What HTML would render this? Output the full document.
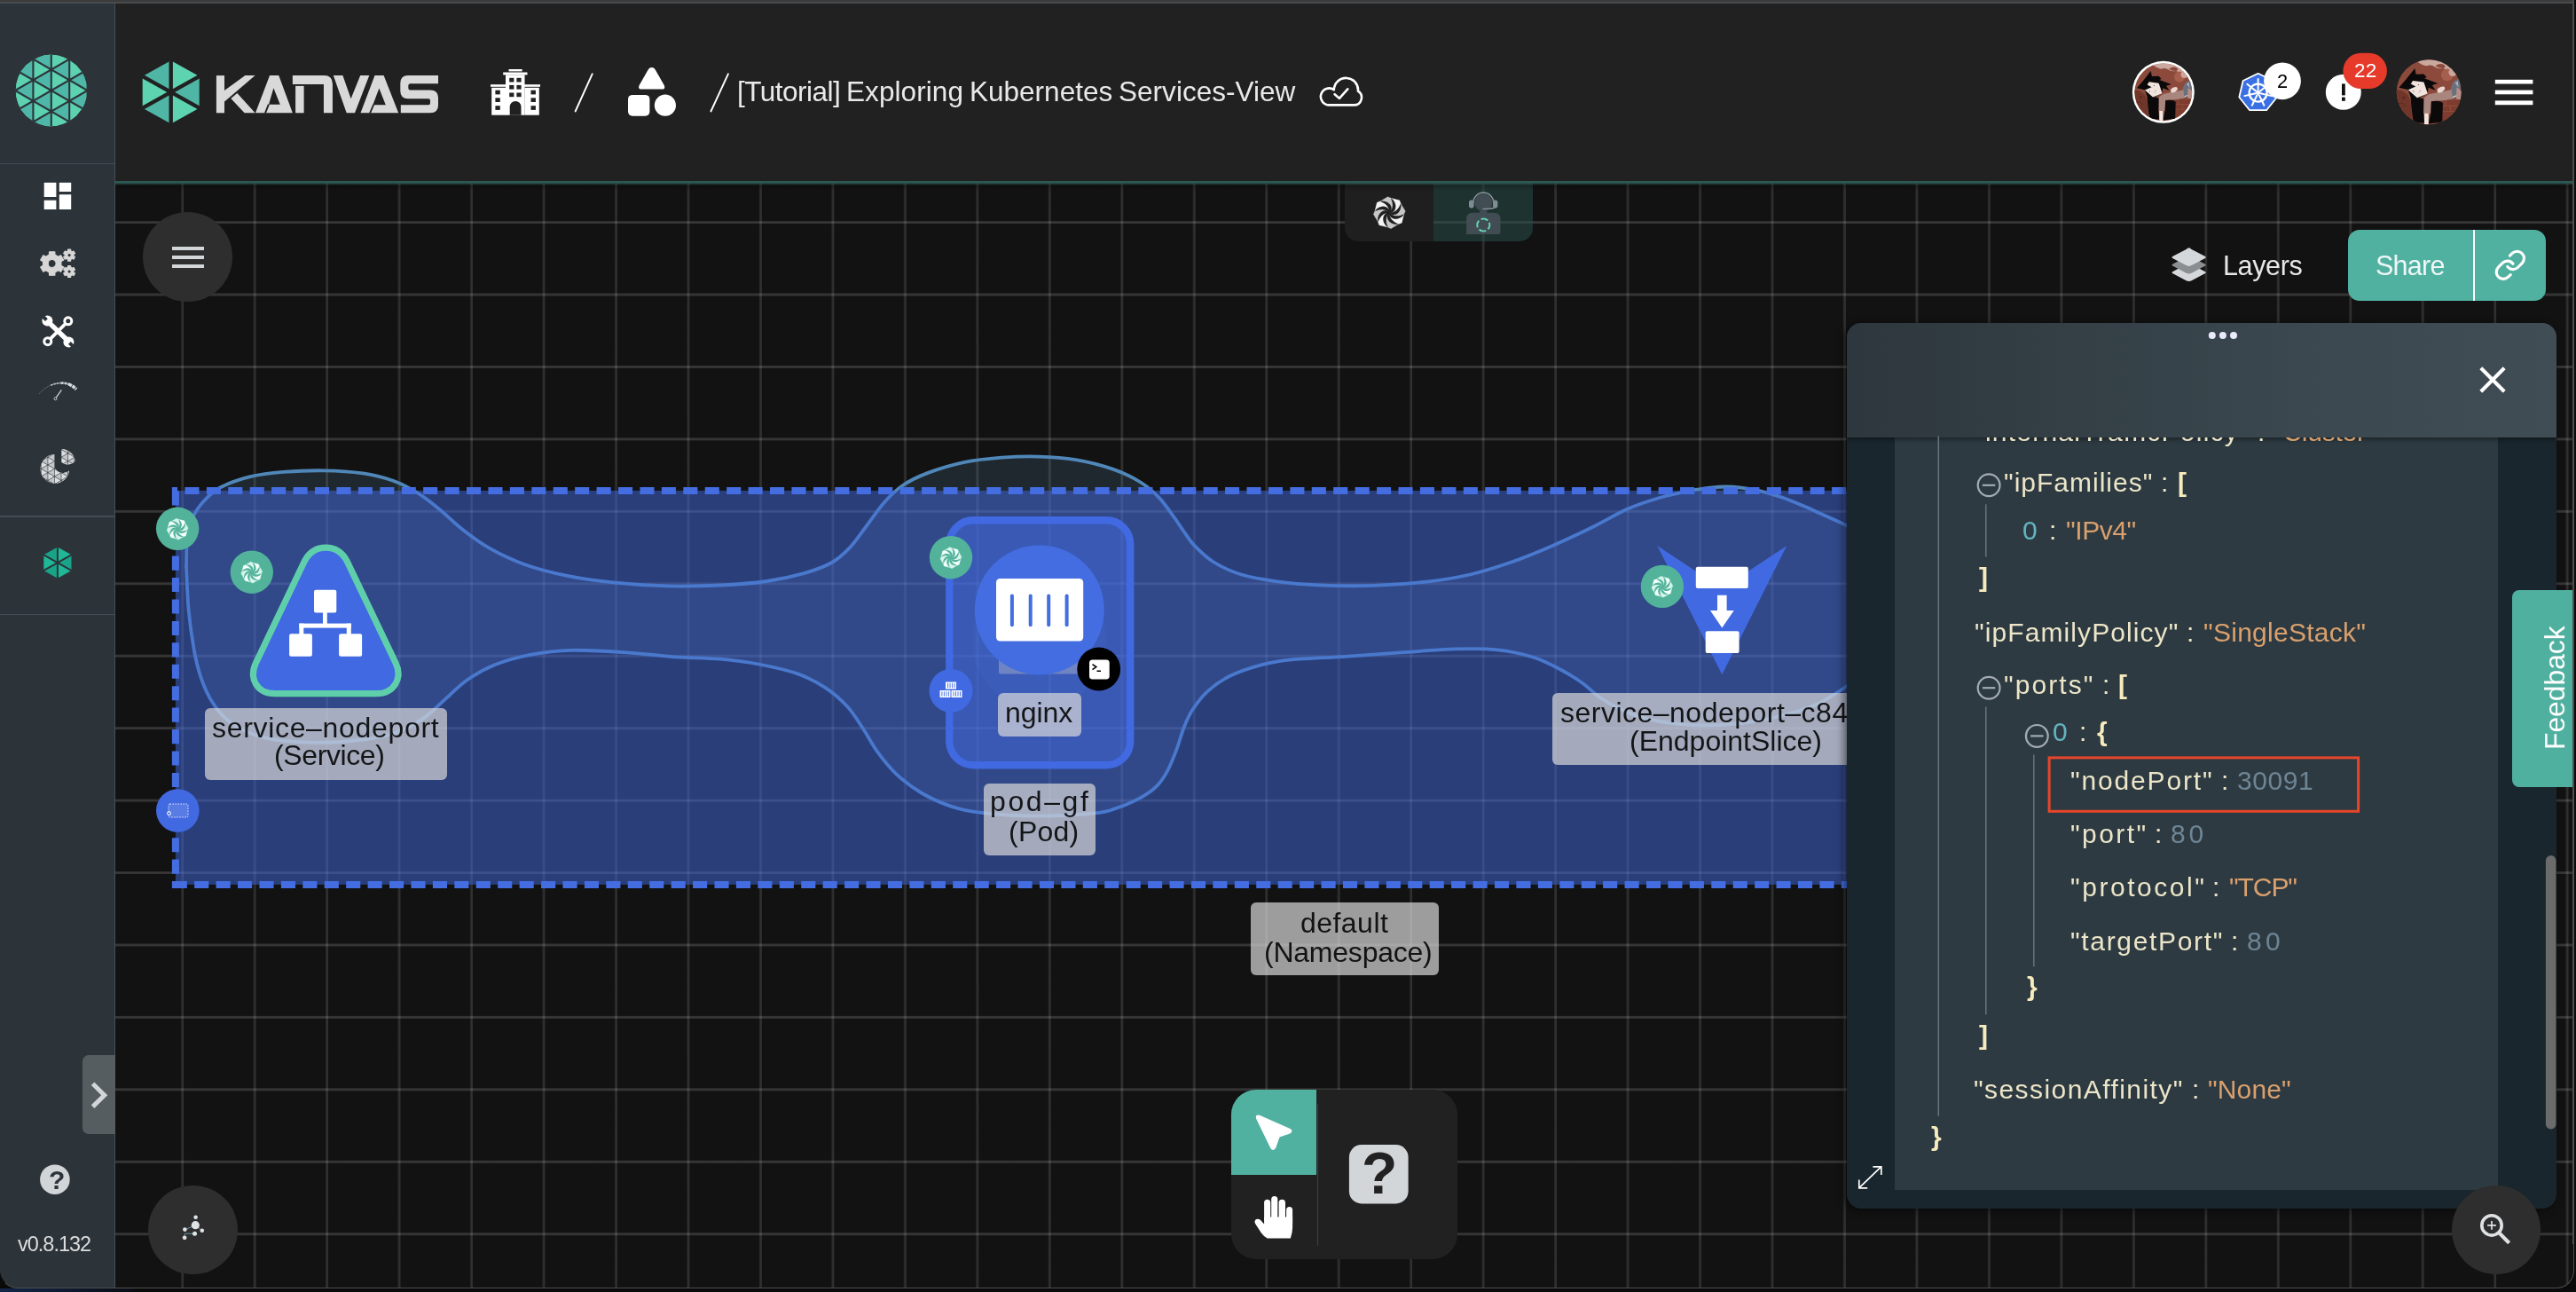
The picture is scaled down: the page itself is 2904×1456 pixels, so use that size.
<!DOCTYPE html>
<html lang="en"><head><meta charset="utf-8"><title>Kanvas</title>
<style>
*{box-sizing:border-box;margin:0;padding:0}
html,body{width:2904px;height:1456px;overflow:hidden;background:#0a0a0a}
body{font-family:"Liberation Sans",sans-serif;position:relative}
.a{position:absolute}
.t{position:absolute;white-space:pre;line-height:1;will-change:transform}
svg{position:absolute;overflow:visible}
#win{position:absolute;left:0;top:0;width:2902px;height:1451px;overflow:hidden;background:#121212;border-radius:0 0 20px 20px}
#grid{position:absolute;left:0;top:0;width:2904px;height:1456px;
 background-image:linear-gradient(to right,rgba(255,255,255,0) 0,rgba(255,255,255,.125) .7px,rgba(255,255,255,.125) 2.5px,rgba(255,255,255,0) 3.2px,transparent 3.2px),linear-gradient(to bottom,rgba(255,255,255,0) 0,rgba(255,255,255,.16) .6px,rgba(255,255,255,.16) 2.4px,rgba(255,255,255,0) 3px,transparent 3px);
 background-size:81.48px 81.45px;background-position:204.1px 249.1px}
.lbl{position:absolute;background:rgba(216,216,216,.7);border-radius:6px}
</style></head>
<body>
<div id="win">
<div id="grid"></div>
<svg width="2904" height="1456" viewBox="0 0 2904 1456" style="left:0;top:0"><path d="M210.0,639.3C210.2,634.1 209.8,617.7 211.0,608.4C212.2,599.1 214.1,590.8 217.2,583.6C220.3,576.4 224.3,570.7 229.5,565.0C234.7,559.3 239.3,554.1 248.1,549.5C256.9,544.9 270.3,540.1 282.2,537.2C294.1,534.3 305.4,533.0 319.3,531.9C333.2,530.8 350.8,530.0 365.8,530.3C380.8,530.5 396.2,531.5 409.1,533.4C422.0,535.3 432.9,538.1 443.2,541.8C453.5,545.5 462.2,550.3 471.0,555.7C479.8,561.1 487.5,567.6 495.8,574.3C504.1,581.0 511.3,588.8 520.6,596.0C529.9,603.2 539.6,610.9 551.5,617.6C563.4,624.3 577.3,631.0 591.8,636.2C606.2,641.4 621.7,645.2 638.2,648.6C654.7,652.0 671.7,654.3 690.8,656.3C709.9,658.3 732.6,659.9 752.8,660.4C773.0,660.9 793.6,660.4 812.2,659.5C830.8,658.6 848.8,657.2 864.5,655.0C880.2,652.8 894.0,649.7 906.2,646.2C918.4,642.7 928.9,638.9 937.6,634.0C946.3,629.1 952.1,623.3 958.5,616.6C964.9,609.9 969.5,602.4 975.9,594.0C982.3,585.6 989.8,574.0 996.8,566.2C1003.8,558.4 1009.6,552.5 1017.7,547.0C1025.8,541.5 1033.9,537.5 1045.5,533.1C1057.1,528.8 1073.4,523.8 1087.3,520.9C1101.2,518.0 1115.2,516.8 1129.1,515.7C1143.0,514.7 1157.0,514.2 1170.9,514.6C1184.8,515.0 1198.8,515.8 1212.7,518.1C1226.6,520.4 1242.2,524.4 1254.4,528.6C1266.6,532.8 1277.1,538.1 1285.8,543.5C1294.5,548.9 1300.3,554.2 1306.7,560.9C1313.1,567.6 1319.4,577.2 1324.1,583.6C1328.8,590.0 1331.2,594.3 1335.0,599.5C1338.8,604.7 1341.0,609.2 1346.6,614.9C1352.1,620.6 1359.5,628.1 1368.3,633.5C1377.1,638.9 1387.5,643.9 1399.4,647.5C1411.3,651.1 1425.3,653.3 1439.8,655.3C1454.3,657.3 1468.2,658.5 1486.3,659.3C1504.4,660.1 1527.7,660.6 1548.4,659.9C1569.1,659.2 1592.5,657.4 1610.6,655.3C1628.7,653.2 1641.6,651.1 1657.1,647.5C1672.6,643.9 1688.2,638.9 1703.7,633.5C1719.2,628.1 1734.8,621.6 1750.3,614.9C1765.8,608.2 1782.8,600.1 1796.9,593.2C1811.0,586.3 1822.7,578.9 1834.9,573.6C1847.1,568.3 1858.2,564.7 1869.9,561.3C1881.6,557.9 1895.1,555.1 1904.8,553.2C1914.5,551.3 1921.3,550.5 1928.1,549.7C1934.9,548.9 1939.8,548.5 1945.6,548.5C1951.4,548.5 1956.2,548.8 1963.0,549.7C1969.8,550.6 1978.5,551.9 1986.3,553.8C1994.1,555.6 2001.8,558.1 2009.6,560.8C2017.4,563.5 2025.1,566.8 2032.9,570.1C2040.7,573.4 2048.0,576.9 2056.2,580.6C2064.3,584.3 2073.7,588.0 2081.8,592.2C2089.9,596.4 2096.1,598.0 2105.0,606.0C2113.9,614.0 2127.5,626.0 2135.0,640.0C2142.5,654.0 2151.7,673.3 2150.0,690.0C2148.3,706.7 2136.3,726.1 2125.0,740.0C2113.7,753.9 2095.3,764.1 2082.0,773.3C2068.7,782.5 2059.2,789.0 2045.3,795.0C2031.4,801.0 2014.3,805.5 1998.8,809.0C1983.3,812.5 1967.7,814.8 1952.2,816.1C1936.7,817.4 1921.1,817.7 1905.6,816.8C1890.1,815.9 1871.9,813.5 1859.0,810.6C1846.1,807.8 1837.3,803.9 1828.0,799.7C1818.7,795.6 1810.3,790.6 1803.1,785.7C1795.8,780.8 1791.8,775.4 1784.5,770.2C1777.2,765.0 1768.9,759.6 1759.6,754.7C1750.3,749.8 1740.5,744.4 1728.6,740.7C1716.7,737.0 1702.7,733.8 1688.2,732.3C1673.7,730.8 1659.7,730.9 1641.6,731.4C1623.5,731.9 1600.2,734.0 1579.5,735.4C1558.8,736.8 1538.0,738.5 1517.4,739.8C1496.8,741.1 1471.7,741.8 1455.8,743.4C1439.9,745.0 1433.1,746.4 1421.8,749.4C1410.5,752.4 1397.6,756.5 1387.7,761.3C1377.8,766.1 1369.3,772.0 1362.2,778.3C1355.1,784.5 1349.6,792.0 1345.1,798.8C1340.5,805.6 1338.0,811.6 1334.9,819.2C1331.8,826.9 1329.5,836.5 1326.4,844.7C1323.3,852.9 1319.9,861.8 1316.2,868.6C1312.5,875.4 1309.4,880.5 1304.3,885.6C1299.2,890.7 1292.9,895.1 1285.5,899.2C1278.1,903.3 1268.1,907.5 1260.0,910.3C1251.9,913.1 1251.8,914.5 1237.0,916.1C1222.2,917.7 1192.4,919.6 1170.9,919.6C1149.4,919.6 1124.5,917.9 1108.2,916.1C1092.0,914.4 1085.0,912.9 1073.4,909.1C1061.8,905.3 1049.0,899.6 1038.6,893.5C1028.1,887.4 1018.8,880.1 1010.7,872.6C1002.6,865.1 996.2,856.9 989.8,848.2C983.4,839.5 978.2,829.0 972.4,820.3C966.6,811.6 962.0,803.5 955.0,796.0C948.0,788.5 939.9,781.2 930.6,775.1C921.3,769.0 911.5,763.8 899.3,759.4C887.1,755.0 872.0,751.8 857.5,749.0C843.0,746.2 828.5,744.2 812.2,742.7C796.0,741.2 777.6,741.5 760.0,740.3C742.4,739.1 725.6,736.5 706.3,735.3C687.0,734.0 662.4,732.4 644.4,732.8C626.4,733.2 612.5,735.1 598.0,737.8C583.5,740.5 569.6,744.5 557.7,749.2C545.8,754.0 536.0,759.8 526.7,766.3C517.4,772.8 510.2,780.7 502.0,787.9C493.8,795.1 487.0,803.1 477.2,809.6C467.4,816.1 456.6,822.4 443.2,826.6C429.8,830.8 411.7,833.3 396.7,835.0C381.7,836.7 367.8,837.0 353.4,836.8C338.9,836.6 322.4,835.7 310.0,833.7C297.6,831.8 288.4,829.1 279.1,825.1C269.8,821.1 261.3,815.8 254.3,809.6C247.3,803.4 242.0,795.6 237.3,787.9C232.7,780.2 229.5,772.5 226.4,763.2C223.3,753.9 221.0,745.1 218.7,732.2C216.4,719.3 213.9,701.3 212.5,685.8C211.1,670.3 210.4,647.0 210.0,639.3C209.6,631.5 209.8,644.4 210.0,639.3Z" fill="rgba(111,165,218,.15)" stroke="#5087b9" stroke-width="3.8" stroke-linejoin="round"/><rect x="197.9" y="552.9" width="2200" height="444" fill="rgba(65,105,225,.5)"/><g fill="none" stroke="#446de2" stroke-width="8" stroke-dasharray="16.1 8.33"><path d="M193.9,552.9 H2400" stroke-dashoffset="9.93"/><path d="M197.9,548.9 V1001" stroke-dashoffset="20.03"/><path d="M193.9,997 H2400" stroke-dashoffset="23.59"/></g><path d="M367.2,617.2 C378,617.2 386,623 391,632 L446,747 C454,764 445,781.7 424,781.7 L310,781.7 C289,781.7 280.5,764 288.5,747 L343.5,632 C348.5,623 356.5,617.2 367.2,617.2Z" fill="#4169e1" stroke="#5fcfab" stroke-width="7.2" stroke-linejoin="round"/><g fill="#fff"><rect x="354" y="664.8" width="25.3" height="25.7" rx="2"/><rect x="364" y="689" width="4.8" height="15"/><rect x="337.3" y="702.6" width="58.5" height="5"/><rect x="337.3" y="702.6" width="5" height="13"/><rect x="390.8" y="702.6" width="5" height="13"/><rect x="326.1" y="714.2" width="25.8" height="25.6" rx="2"/><rect x="382.1" y="714.2" width="26" height="25.6" rx="2"/></g><circle cx="200.1" cy="595.8" r="24.2" fill="#52b29a"/><polygon points="200.66,595.98 201.31,595.61 201.90,595.14 202.43,594.58 202.87,593.93 203.22,593.21 203.48,592.43 203.63,591.59 203.67,590.70 203.59,589.79 203.38,588.86 203.06,587.93 202.61,587.01 202.03,586.12 201.33,585.26 207.78,586.85 208.71,589.33 208.60,590.43 208.37,591.47 208.04,592.45 207.61,593.33 207.10,594.13 206.51,594.83 205.86,595.43 205.16,595.92 204.42,596.29 203.66,596.55 202.89,596.70 202.12,596.73 201.38,596.64 200.66,596.44" fill="#f2fffb" stroke="#f2fffb" stroke-width="0.3" stroke-linejoin="round"/><polygon points="200.66,596.44 201.38,596.64 202.12,596.73 202.89,596.70 203.66,596.55 204.42,596.29 205.16,595.92 205.86,595.43 206.51,594.83 207.10,594.13 207.61,593.33 208.04,592.45 208.37,591.47 208.60,590.43 208.71,589.33 212.14,595.02 211.04,597.43 210.18,598.13 209.29,598.71 208.37,599.16 207.44,599.48 206.51,599.69 205.60,599.77 204.71,599.73 203.87,599.58 203.09,599.32 202.37,598.97 201.72,598.53 201.16,598.00 200.69,597.41 200.32,596.76" fill="#d5f4ec" stroke="#d5f4ec" stroke-width="0.3" stroke-linejoin="round"/><polygon points="200.32,596.76 200.69,597.41 201.16,598.00 201.72,598.53 202.37,598.97 203.09,599.32 203.87,599.58 204.71,599.73 205.60,599.77 206.51,599.69 207.44,599.48 208.37,599.16 209.29,598.71 210.18,598.13 211.04,597.43 209.45,603.88 206.97,604.81 205.87,604.70 204.83,604.47 203.85,604.14 202.97,603.71 202.17,603.20 201.47,602.61 200.87,601.96 200.38,601.26 200.01,600.52 199.75,599.76 199.60,598.99 199.57,598.22 199.66,597.48 199.86,596.76" fill="#f2fffb" stroke="#f2fffb" stroke-width="0.3" stroke-linejoin="round"/><polygon points="199.86,596.76 199.66,597.48 199.57,598.22 199.60,598.99 199.75,599.76 200.01,600.52 200.38,601.26 200.87,601.96 201.47,602.61 202.17,603.20 202.97,603.71 203.85,604.14 204.83,604.47 205.87,604.70 206.97,604.81 201.28,608.24 198.87,607.14 198.17,606.28 197.59,605.39 197.14,604.47 196.82,603.54 196.61,602.61 196.53,601.70 196.57,600.81 196.72,599.97 196.98,599.19 197.33,598.47 197.77,597.82 198.30,597.26 198.89,596.79 199.54,596.42" fill="#d5f4ec" stroke="#d5f4ec" stroke-width="0.3" stroke-linejoin="round"/><polygon points="199.54,596.42 198.89,596.79 198.30,597.26 197.77,597.82 197.33,598.47 196.98,599.19 196.72,599.97 196.57,600.81 196.53,601.70 196.61,602.61 196.82,603.54 197.14,604.47 197.59,605.39 198.17,606.28 198.87,607.14 192.42,605.55 191.49,603.07 191.60,601.97 191.83,600.93 192.16,599.95 192.59,599.07 193.10,598.27 193.69,597.57 194.34,596.97 195.04,596.48 195.78,596.11 196.54,595.85 197.31,595.70 198.08,595.67 198.82,595.76 199.54,595.96" fill="#f2fffb" stroke="#f2fffb" stroke-width="0.3" stroke-linejoin="round"/><polygon points="199.54,595.96 198.82,595.76 198.08,595.67 197.31,595.70 196.54,595.85 195.78,596.11 195.04,596.48 194.34,596.97 193.69,597.57 193.10,598.27 192.59,599.07 192.16,599.95 191.83,600.93 191.60,601.97 191.49,603.07 188.06,597.38 189.16,594.97 190.02,594.27 190.91,593.69 191.83,593.24 192.76,592.92 193.69,592.71 194.60,592.63 195.49,592.67 196.33,592.82 197.11,593.08 197.83,593.43 198.48,593.87 199.04,594.40 199.51,594.99 199.88,595.64" fill="#d5f4ec" stroke="#d5f4ec" stroke-width="0.3" stroke-linejoin="round"/><polygon points="199.88,595.64 199.51,594.99 199.04,594.40 198.48,593.87 197.83,593.43 197.11,593.08 196.33,592.82 195.49,592.67 194.60,592.63 193.69,592.71 192.76,592.92 191.83,593.24 190.91,593.69 190.02,594.27 189.16,594.97 190.75,588.52 193.23,587.59 194.33,587.70 195.37,587.93 196.35,588.26 197.23,588.69 198.03,589.20 198.73,589.79 199.33,590.44 199.82,591.14 200.19,591.88 200.45,592.64 200.60,593.41 200.63,594.18 200.54,594.92 200.34,595.64" fill="#f2fffb" stroke="#f2fffb" stroke-width="0.3" stroke-linejoin="round"/><polygon points="200.34,595.64 200.54,594.92 200.63,594.18 200.60,593.41 200.45,592.64 200.19,591.88 199.82,591.14 199.33,590.44 198.73,589.79 198.03,589.20 197.23,588.69 196.35,588.26 195.37,587.93 194.33,587.70 193.23,587.59 198.92,584.16 201.33,585.26 202.03,586.12 202.61,587.01 203.06,587.93 203.38,588.86 203.59,589.79 203.67,590.70 203.63,591.59 203.48,592.43 203.22,593.21 202.87,593.93 202.43,594.58 201.90,595.14 201.31,595.61 200.66,595.98" fill="#d5f4ec" stroke="#d5f4ec" stroke-width="0.3" stroke-linejoin="round"/><polygon points="200.83,596.40 201.62,596.24 202.37,595.93 203.05,595.47 203.65,594.89 204.15,594.18 204.53,593.36 204.76,592.45 204.84,591.47 204.76,590.43 204.49,589.36 204.05,588.29 203.41,587.23 202.56,586.22 201.33,585.26 201.33,585.26 201.50,586.01 201.81,586.79 202.07,587.58 202.27,588.37 202.41,589.15 202.49,589.94 202.49,590.72 202.43,591.49 202.29,592.24 202.09,592.98 201.80,593.68 201.44,594.35 201.00,594.97 200.49,595.55" fill="#52b29a"/><polygon points="200.47,596.86 201.14,597.31 201.89,597.61 202.70,597.77 203.54,597.78 204.39,597.64 205.23,597.32 206.05,596.85 206.80,596.21 207.47,595.41 208.04,594.47 208.49,593.39 208.78,592.20 208.90,590.88 208.71,589.33 208.71,589.33 208.29,589.99 207.96,590.75 207.59,591.50 207.18,592.20 206.72,592.85 206.21,593.46 205.67,594.02 205.08,594.52 204.45,594.95 203.78,595.33 203.08,595.62 202.35,595.84 201.61,595.97 200.84,596.02" fill="#52b29a"/><polygon points="199.90,596.93 200.06,597.72 200.37,598.47 200.83,599.15 201.41,599.75 202.12,600.25 202.94,600.63 203.85,600.86 204.83,600.94 205.87,600.86 206.94,600.59 208.01,600.15 209.07,599.51 210.08,598.66 211.04,597.43 211.04,597.43 210.29,597.60 209.51,597.91 208.72,598.17 207.93,598.37 207.15,598.51 206.36,598.59 205.58,598.59 204.81,598.53 204.06,598.39 203.32,598.19 202.62,597.90 201.95,597.54 201.33,597.10 200.75,596.59" fill="#52b29a"/><polygon points="199.44,596.57 198.99,597.24 198.69,597.99 198.53,598.80 198.52,599.64 198.66,600.49 198.98,601.33 199.45,602.15 200.09,602.90 200.89,603.57 201.83,604.14 202.91,604.59 204.10,604.88 205.42,605.00 206.97,604.81 206.97,604.81 206.31,604.39 205.55,604.06 204.80,603.69 204.10,603.28 203.45,602.82 202.84,602.31 202.28,601.77 201.78,601.18 201.35,600.55 200.97,599.88 200.68,599.18 200.46,598.45 200.33,597.71 200.28,596.94" fill="#52b29a"/><polygon points="199.37,596.00 198.58,596.16 197.83,596.47 197.15,596.93 196.55,597.51 196.05,598.22 195.67,599.04 195.44,599.95 195.36,600.93 195.44,601.97 195.71,603.04 196.15,604.11 196.79,605.17 197.64,606.18 198.87,607.14 198.87,607.14 198.70,606.39 198.39,605.61 198.13,604.82 197.93,604.03 197.79,603.25 197.71,602.46 197.71,601.68 197.77,600.91 197.91,600.16 198.11,599.42 198.40,598.72 198.76,598.05 199.20,597.43 199.71,596.85" fill="#52b29a"/><polygon points="199.73,595.54 199.06,595.09 198.31,594.79 197.50,594.63 196.66,594.62 195.81,594.76 194.97,595.08 194.15,595.55 193.40,596.19 192.73,596.99 192.16,597.93 191.71,599.01 191.42,600.20 191.30,601.52 191.49,603.07 191.49,603.07 191.91,602.41 192.24,601.65 192.61,600.90 193.02,600.20 193.48,599.55 193.99,598.94 194.53,598.38 195.12,597.88 195.75,597.45 196.42,597.07 197.12,596.78 197.85,596.56 198.59,596.43 199.36,596.38" fill="#52b29a"/><polygon points="200.30,595.47 200.14,594.68 199.83,593.93 199.37,593.25 198.79,592.65 198.08,592.15 197.26,591.77 196.35,591.54 195.37,591.46 194.33,591.54 193.26,591.81 192.19,592.25 191.13,592.89 190.12,593.74 189.16,594.97 189.16,594.97 189.91,594.80 190.69,594.49 191.48,594.23 192.27,594.03 193.05,593.89 193.84,593.81 194.62,593.81 195.39,593.87 196.14,594.01 196.88,594.21 197.58,594.50 198.25,594.86 198.87,595.30 199.45,595.81" fill="#52b29a"/><polygon points="200.76,595.83 201.21,595.16 201.51,594.41 201.67,593.60 201.68,592.76 201.54,591.91 201.22,591.07 200.75,590.25 200.11,589.50 199.31,588.83 198.37,588.26 197.29,587.81 196.10,587.52 194.78,587.40 193.23,587.59 193.23,587.59 193.89,588.01 194.65,588.34 195.40,588.71 196.10,589.12 196.75,589.58 197.36,590.09 197.92,590.63 198.42,591.22 198.85,591.85 199.23,592.52 199.52,593.22 199.74,593.95 199.87,594.69 199.92,595.46" fill="#52b29a"/><circle cx="200.1" cy="596.1999999999999" r="1.03" fill="#52b29a"/><circle cx="283.8" cy="644.7" r="24.2" fill="#52b29a"/><polygon points="284.36,644.88 285.01,644.51 285.60,644.04 286.13,643.48 286.57,642.83 286.92,642.11 287.18,641.33 287.33,640.49 287.37,639.60 287.29,638.69 287.08,637.76 286.76,636.83 286.31,635.91 285.73,635.02 285.03,634.16 291.48,635.75 292.41,638.23 292.30,639.33 292.07,640.37 291.74,641.35 291.31,642.23 290.80,643.03 290.21,643.73 289.56,644.33 288.86,644.82 288.12,645.19 287.36,645.45 286.59,645.60 285.82,645.63 285.08,645.54 284.36,645.34" fill="#f2fffb" stroke="#f2fffb" stroke-width="0.3" stroke-linejoin="round"/><polygon points="284.36,645.34 285.08,645.54 285.82,645.63 286.59,645.60 287.36,645.45 288.12,645.19 288.86,644.82 289.56,644.33 290.21,643.73 290.80,643.03 291.31,642.23 291.74,641.35 292.07,640.37 292.30,639.33 292.41,638.23 295.84,643.92 294.74,646.33 293.88,647.03 292.99,647.61 292.07,648.06 291.14,648.38 290.21,648.59 289.30,648.67 288.41,648.63 287.57,648.48 286.79,648.22 286.07,647.87 285.42,647.43 284.86,646.90 284.39,646.31 284.02,645.66" fill="#d5f4ec" stroke="#d5f4ec" stroke-width="0.3" stroke-linejoin="round"/><polygon points="284.02,645.66 284.39,646.31 284.86,646.90 285.42,647.43 286.07,647.87 286.79,648.22 287.57,648.48 288.41,648.63 289.30,648.67 290.21,648.59 291.14,648.38 292.07,648.06 292.99,647.61 293.88,647.03 294.74,646.33 293.15,652.78 290.67,653.71 289.57,653.60 288.53,653.37 287.55,653.04 286.67,652.61 285.87,652.10 285.17,651.51 284.57,650.86 284.08,650.16 283.71,649.42 283.45,648.66 283.30,647.89 283.27,647.12 283.36,646.38 283.56,645.66" fill="#f2fffb" stroke="#f2fffb" stroke-width="0.3" stroke-linejoin="round"/><polygon points="283.56,645.66 283.36,646.38 283.27,647.12 283.30,647.89 283.45,648.66 283.71,649.42 284.08,650.16 284.57,650.86 285.17,651.51 285.87,652.10 286.67,652.61 287.55,653.04 288.53,653.37 289.57,653.60 290.67,653.71 284.98,657.14 282.57,656.04 281.87,655.18 281.29,654.29 280.84,653.37 280.52,652.44 280.31,651.51 280.23,650.60 280.27,649.71 280.42,648.87 280.68,648.09 281.03,647.37 281.47,646.72 282.00,646.16 282.59,645.69 283.24,645.32" fill="#d5f4ec" stroke="#d5f4ec" stroke-width="0.3" stroke-linejoin="round"/><polygon points="283.24,645.32 282.59,645.69 282.00,646.16 281.47,646.72 281.03,647.37 280.68,648.09 280.42,648.87 280.27,649.71 280.23,650.60 280.31,651.51 280.52,652.44 280.84,653.37 281.29,654.29 281.87,655.18 282.57,656.04 276.12,654.45 275.19,651.97 275.30,650.87 275.53,649.83 275.86,648.85 276.29,647.97 276.80,647.17 277.39,646.47 278.04,645.87 278.74,645.38 279.48,645.01 280.24,644.75 281.01,644.60 281.78,644.57 282.52,644.66 283.24,644.86" fill="#f2fffb" stroke="#f2fffb" stroke-width="0.3" stroke-linejoin="round"/><polygon points="283.24,644.86 282.52,644.66 281.78,644.57 281.01,644.60 280.24,644.75 279.48,645.01 278.74,645.38 278.04,645.87 277.39,646.47 276.80,647.17 276.29,647.97 275.86,648.85 275.53,649.83 275.30,650.87 275.19,651.97 271.76,646.28 272.86,643.87 273.72,643.17 274.61,642.59 275.53,642.14 276.46,641.82 277.39,641.61 278.30,641.53 279.19,641.57 280.03,641.72 280.81,641.98 281.53,642.33 282.18,642.77 282.74,643.30 283.21,643.89 283.58,644.54" fill="#d5f4ec" stroke="#d5f4ec" stroke-width="0.3" stroke-linejoin="round"/><polygon points="283.58,644.54 283.21,643.89 282.74,643.30 282.18,642.77 281.53,642.33 280.81,641.98 280.03,641.72 279.19,641.57 278.30,641.53 277.39,641.61 276.46,641.82 275.53,642.14 274.61,642.59 273.72,643.17 272.86,643.87 274.45,637.42 276.93,636.49 278.03,636.60 279.07,636.83 280.05,637.16 280.93,637.59 281.73,638.10 282.43,638.69 283.03,639.34 283.52,640.04 283.89,640.78 284.15,641.54 284.30,642.31 284.33,643.08 284.24,643.82 284.04,644.54" fill="#f2fffb" stroke="#f2fffb" stroke-width="0.3" stroke-linejoin="round"/><polygon points="284.04,644.54 284.24,643.82 284.33,643.08 284.30,642.31 284.15,641.54 283.89,640.78 283.52,640.04 283.03,639.34 282.43,638.69 281.73,638.10 280.93,637.59 280.05,637.16 279.07,636.83 278.03,636.60 276.93,636.49 282.62,633.06 285.03,634.16 285.73,635.02 286.31,635.91 286.76,636.83 287.08,637.76 287.29,638.69 287.37,639.60 287.33,640.49 287.18,641.33 286.92,642.11 286.57,642.83 286.13,643.48 285.60,644.04 285.01,644.51 284.36,644.88" fill="#d5f4ec" stroke="#d5f4ec" stroke-width="0.3" stroke-linejoin="round"/><polygon points="284.53,645.30 285.32,645.14 286.07,644.83 286.75,644.37 287.35,643.79 287.85,643.08 288.23,642.26 288.46,641.35 288.54,640.37 288.46,639.33 288.19,638.26 287.75,637.19 287.11,636.13 286.26,635.12 285.03,634.16 285.03,634.16 285.20,634.91 285.51,635.69 285.77,636.48 285.97,637.27 286.11,638.05 286.19,638.84 286.19,639.62 286.13,640.39 285.99,641.14 285.79,641.88 285.50,642.58 285.14,643.25 284.70,643.87 284.19,644.45" fill="#52b29a"/><polygon points="284.17,645.76 284.84,646.21 285.59,646.51 286.40,646.67 287.24,646.68 288.09,646.54 288.93,646.22 289.75,645.75 290.50,645.11 291.17,644.31 291.74,643.37 292.19,642.29 292.48,641.10 292.60,639.78 292.41,638.23 292.41,638.23 291.99,638.89 291.66,639.65 291.29,640.40 290.88,641.10 290.42,641.75 289.91,642.36 289.37,642.92 288.78,643.42 288.15,643.85 287.48,644.23 286.78,644.52 286.05,644.74 285.31,644.87 284.54,644.92" fill="#52b29a"/><polygon points="283.60,645.83 283.76,646.62 284.07,647.37 284.53,648.05 285.11,648.65 285.82,649.15 286.64,649.53 287.55,649.76 288.53,649.84 289.57,649.76 290.64,649.49 291.71,649.05 292.77,648.41 293.78,647.56 294.74,646.33 294.74,646.33 293.99,646.50 293.21,646.81 292.42,647.07 291.63,647.27 290.85,647.41 290.06,647.49 289.28,647.49 288.51,647.43 287.76,647.29 287.02,647.09 286.32,646.80 285.65,646.44 285.03,646.00 284.45,645.49" fill="#52b29a"/><polygon points="283.14,645.47 282.69,646.14 282.39,646.89 282.23,647.70 282.22,648.54 282.36,649.39 282.68,650.23 283.15,651.05 283.79,651.80 284.59,652.47 285.53,653.04 286.61,653.49 287.80,653.78 289.12,653.90 290.67,653.71 290.67,653.71 290.01,653.29 289.25,652.96 288.50,652.59 287.80,652.18 287.15,651.72 286.54,651.21 285.98,650.67 285.48,650.08 285.05,649.45 284.67,648.78 284.38,648.08 284.16,647.35 284.03,646.61 283.98,645.84" fill="#52b29a"/><polygon points="283.07,644.90 282.28,645.06 281.53,645.37 280.85,645.83 280.25,646.41 279.75,647.12 279.37,647.94 279.14,648.85 279.06,649.83 279.14,650.87 279.41,651.94 279.85,653.01 280.49,654.07 281.34,655.08 282.57,656.04 282.57,656.04 282.40,655.29 282.09,654.51 281.83,653.72 281.63,652.93 281.49,652.15 281.41,651.36 281.41,650.58 281.47,649.81 281.61,649.06 281.81,648.32 282.10,647.62 282.46,646.95 282.90,646.33 283.41,645.75" fill="#52b29a"/><polygon points="283.43,644.44 282.76,643.99 282.01,643.69 281.20,643.53 280.36,643.52 279.51,643.66 278.67,643.98 277.85,644.45 277.10,645.09 276.43,645.89 275.86,646.83 275.41,647.91 275.12,649.10 275.00,650.42 275.19,651.97 275.19,651.97 275.61,651.31 275.94,650.55 276.31,649.80 276.72,649.10 277.18,648.45 277.69,647.84 278.23,647.28 278.82,646.78 279.45,646.35 280.12,645.97 280.82,645.68 281.55,645.46 282.29,645.33 283.06,645.28" fill="#52b29a"/><polygon points="284.00,644.37 283.84,643.58 283.53,642.83 283.07,642.15 282.49,641.55 281.78,641.05 280.96,640.67 280.05,640.44 279.07,640.36 278.03,640.44 276.96,640.71 275.89,641.15 274.83,641.79 273.82,642.64 272.86,643.87 272.86,643.87 273.61,643.70 274.39,643.39 275.18,643.13 275.97,642.93 276.75,642.79 277.54,642.71 278.32,642.71 279.09,642.77 279.84,642.91 280.58,643.11 281.28,643.40 281.95,643.76 282.57,644.20 283.15,644.71" fill="#52b29a"/><polygon points="284.46,644.73 284.91,644.06 285.21,643.31 285.37,642.50 285.38,641.66 285.24,640.81 284.92,639.97 284.45,639.15 283.81,638.40 283.01,637.73 282.07,637.16 280.99,636.71 279.80,636.42 278.48,636.30 276.93,636.49 276.93,636.49 277.59,636.91 278.35,637.24 279.10,637.61 279.80,638.02 280.45,638.48 281.06,638.99 281.62,639.53 282.12,640.12 282.55,640.75 282.93,641.42 283.22,642.12 283.44,642.85 283.57,643.59 283.62,644.36" fill="#52b29a"/><circle cx="283.8" cy="645.1" r="1.03" fill="#52b29a"/><circle cx="200.3" cy="913.5" r="24.3" fill="#4169e1"/><rect x="190" y="906" width="22" height="15" rx="1.5" fill="rgba(255,255,255,.12)" stroke="#e6edff" stroke-width="1" stroke-dasharray="1.5 1.5"/><circle cx="190.5" cy="916.5" r="2" fill="none" stroke="#fff" stroke-width="1"/><rect x="1070.3" y="586.3" width="203.9" height="276" rx="27" fill="rgba(65,105,225,.5)" stroke="#4169e1" stroke-width="8.4"/><circle cx="1171.8" cy="722.5" r="76" fill="rgba(90,125,225,.10)"/><rect x="1126" y="742" width="92" height="17.5" rx="2" fill="rgba(216,216,216,.33)"/><circle cx="1171.8" cy="687.4" r="73" fill="#436de0"/><rect x="1123" y="652" width="98.2" height="70.5" rx="4.5" fill="#fff"/><rect x="1138.9" y="669.5" width="4" height="36.7" rx="2" fill="#436de0"/><rect x="1159.7" y="669.5" width="4" height="36.7" rx="2" fill="#436de0"/><rect x="1180.2" y="669.5" width="4" height="36.7" rx="2" fill="#436de0"/><rect x="1200.6" y="669.5" width="4" height="36.7" rx="2" fill="#436de0"/><circle cx="1072" cy="628.2" r="24.2" fill="#52b29a"/><polygon points="1072.56,628.38 1073.21,628.01 1073.80,627.54 1074.33,626.98 1074.77,626.33 1075.12,625.61 1075.38,624.83 1075.53,623.99 1075.57,623.10 1075.49,622.19 1075.28,621.26 1074.96,620.33 1074.51,619.41 1073.93,618.52 1073.23,617.66 1079.68,619.25 1080.61,621.73 1080.50,622.83 1080.27,623.87 1079.94,624.85 1079.51,625.73 1079.00,626.53 1078.41,627.23 1077.76,627.83 1077.06,628.32 1076.32,628.69 1075.56,628.95 1074.79,629.10 1074.02,629.13 1073.28,629.04 1072.56,628.84" fill="#f2fffb" stroke="#f2fffb" stroke-width="0.3" stroke-linejoin="round"/><polygon points="1072.56,628.84 1073.28,629.04 1074.02,629.13 1074.79,629.10 1075.56,628.95 1076.32,628.69 1077.06,628.32 1077.76,627.83 1078.41,627.23 1079.00,626.53 1079.51,625.73 1079.94,624.85 1080.27,623.87 1080.50,622.83 1080.61,621.73 1084.04,627.42 1082.94,629.83 1082.08,630.53 1081.19,631.11 1080.27,631.56 1079.34,631.88 1078.41,632.09 1077.50,632.17 1076.61,632.13 1075.77,631.98 1074.99,631.72 1074.27,631.37 1073.62,630.93 1073.06,630.40 1072.59,629.81 1072.22,629.16" fill="#d5f4ec" stroke="#d5f4ec" stroke-width="0.3" stroke-linejoin="round"/><polygon points="1072.22,629.16 1072.59,629.81 1073.06,630.40 1073.62,630.93 1074.27,631.37 1074.99,631.72 1075.77,631.98 1076.61,632.13 1077.50,632.17 1078.41,632.09 1079.34,631.88 1080.27,631.56 1081.19,631.11 1082.08,630.53 1082.94,629.83 1081.35,636.28 1078.87,637.21 1077.77,637.10 1076.73,636.87 1075.75,636.54 1074.87,636.11 1074.07,635.60 1073.37,635.01 1072.77,634.36 1072.28,633.66 1071.91,632.92 1071.65,632.16 1071.50,631.39 1071.47,630.62 1071.56,629.88 1071.76,629.16" fill="#f2fffb" stroke="#f2fffb" stroke-width="0.3" stroke-linejoin="round"/><polygon points="1071.76,629.16 1071.56,629.88 1071.47,630.62 1071.50,631.39 1071.65,632.16 1071.91,632.92 1072.28,633.66 1072.77,634.36 1073.37,635.01 1074.07,635.60 1074.87,636.11 1075.75,636.54 1076.73,636.87 1077.77,637.10 1078.87,637.21 1073.18,640.64 1070.77,639.54 1070.07,638.68 1069.49,637.79 1069.04,636.87 1068.72,635.94 1068.51,635.01 1068.43,634.10 1068.47,633.21 1068.62,632.37 1068.88,631.59 1069.23,630.87 1069.67,630.22 1070.20,629.66 1070.79,629.19 1071.44,628.82" fill="#d5f4ec" stroke="#d5f4ec" stroke-width="0.3" stroke-linejoin="round"/><polygon points="1071.44,628.82 1070.79,629.19 1070.20,629.66 1069.67,630.22 1069.23,630.87 1068.88,631.59 1068.62,632.37 1068.47,633.21 1068.43,634.10 1068.51,635.01 1068.72,635.94 1069.04,636.87 1069.49,637.79 1070.07,638.68 1070.77,639.54 1064.32,637.95 1063.39,635.47 1063.50,634.37 1063.73,633.33 1064.06,632.35 1064.49,631.47 1065.00,630.67 1065.59,629.97 1066.24,629.37 1066.94,628.88 1067.68,628.51 1068.44,628.25 1069.21,628.10 1069.98,628.07 1070.72,628.16 1071.44,628.36" fill="#f2fffb" stroke="#f2fffb" stroke-width="0.3" stroke-linejoin="round"/><polygon points="1071.44,628.36 1070.72,628.16 1069.98,628.07 1069.21,628.10 1068.44,628.25 1067.68,628.51 1066.94,628.88 1066.24,629.37 1065.59,629.97 1065.00,630.67 1064.49,631.47 1064.06,632.35 1063.73,633.33 1063.50,634.37 1063.39,635.47 1059.96,629.78 1061.06,627.37 1061.92,626.67 1062.81,626.09 1063.73,625.64 1064.66,625.32 1065.59,625.11 1066.50,625.03 1067.39,625.07 1068.23,625.22 1069.01,625.48 1069.73,625.83 1070.38,626.27 1070.94,626.80 1071.41,627.39 1071.78,628.04" fill="#d5f4ec" stroke="#d5f4ec" stroke-width="0.3" stroke-linejoin="round"/><polygon points="1071.78,628.04 1071.41,627.39 1070.94,626.80 1070.38,626.27 1069.73,625.83 1069.01,625.48 1068.23,625.22 1067.39,625.07 1066.50,625.03 1065.59,625.11 1064.66,625.32 1063.73,625.64 1062.81,626.09 1061.92,626.67 1061.06,627.37 1062.65,620.92 1065.13,619.99 1066.23,620.10 1067.27,620.33 1068.25,620.66 1069.13,621.09 1069.93,621.60 1070.63,622.19 1071.23,622.84 1071.72,623.54 1072.09,624.28 1072.35,625.04 1072.50,625.81 1072.53,626.58 1072.44,627.32 1072.24,628.04" fill="#f2fffb" stroke="#f2fffb" stroke-width="0.3" stroke-linejoin="round"/><polygon points="1072.24,628.04 1072.44,627.32 1072.53,626.58 1072.50,625.81 1072.35,625.04 1072.09,624.28 1071.72,623.54 1071.23,622.84 1070.63,622.19 1069.93,621.60 1069.13,621.09 1068.25,620.66 1067.27,620.33 1066.23,620.10 1065.13,619.99 1070.82,616.56 1073.23,617.66 1073.93,618.52 1074.51,619.41 1074.96,620.33 1075.28,621.26 1075.49,622.19 1075.57,623.10 1075.53,623.99 1075.38,624.83 1075.12,625.61 1074.77,626.33 1074.33,626.98 1073.80,627.54 1073.21,628.01 1072.56,628.38" fill="#d5f4ec" stroke="#d5f4ec" stroke-width="0.3" stroke-linejoin="round"/><polygon points="1072.73,628.80 1073.52,628.64 1074.27,628.33 1074.95,627.87 1075.55,627.29 1076.05,626.58 1076.43,625.76 1076.66,624.85 1076.74,623.87 1076.66,622.83 1076.39,621.76 1075.95,620.69 1075.31,619.63 1074.46,618.62 1073.23,617.66 1073.23,617.66 1073.40,618.41 1073.71,619.19 1073.97,619.98 1074.17,620.77 1074.31,621.55 1074.39,622.34 1074.39,623.12 1074.33,623.89 1074.19,624.64 1073.99,625.38 1073.70,626.08 1073.34,626.75 1072.90,627.37 1072.39,627.95" fill="#52b29a"/><polygon points="1072.37,629.26 1073.04,629.71 1073.79,630.01 1074.60,630.17 1075.44,630.18 1076.29,630.04 1077.13,629.72 1077.95,629.25 1078.70,628.61 1079.37,627.81 1079.94,626.87 1080.39,625.79 1080.68,624.60 1080.80,623.28 1080.61,621.73 1080.61,621.73 1080.19,622.39 1079.86,623.15 1079.49,623.90 1079.08,624.60 1078.62,625.25 1078.11,625.86 1077.57,626.42 1076.98,626.92 1076.35,627.35 1075.68,627.73 1074.98,628.02 1074.25,628.24 1073.51,628.37 1072.74,628.42" fill="#52b29a"/><polygon points="1071.80,629.33 1071.96,630.12 1072.27,630.87 1072.73,631.55 1073.31,632.15 1074.02,632.65 1074.84,633.03 1075.75,633.26 1076.73,633.34 1077.77,633.26 1078.84,632.99 1079.91,632.55 1080.97,631.91 1081.98,631.06 1082.94,629.83 1082.94,629.83 1082.19,630.00 1081.41,630.31 1080.62,630.57 1079.83,630.77 1079.05,630.91 1078.26,630.99 1077.48,630.99 1076.71,630.93 1075.96,630.79 1075.22,630.59 1074.52,630.30 1073.85,629.94 1073.23,629.50 1072.65,628.99" fill="#52b29a"/><polygon points="1071.34,628.97 1070.89,629.64 1070.59,630.39 1070.43,631.20 1070.42,632.04 1070.56,632.89 1070.88,633.73 1071.35,634.55 1071.99,635.30 1072.79,635.97 1073.73,636.54 1074.81,636.99 1076.00,637.28 1077.32,637.40 1078.87,637.21 1078.87,637.21 1078.21,636.79 1077.45,636.46 1076.70,636.09 1076.00,635.68 1075.35,635.22 1074.74,634.71 1074.18,634.17 1073.68,633.58 1073.25,632.95 1072.87,632.28 1072.58,631.58 1072.36,630.85 1072.23,630.11 1072.18,629.34" fill="#52b29a"/><polygon points="1071.27,628.40 1070.48,628.56 1069.73,628.87 1069.05,629.33 1068.45,629.91 1067.95,630.62 1067.57,631.44 1067.34,632.35 1067.26,633.33 1067.34,634.37 1067.61,635.44 1068.05,636.51 1068.69,637.57 1069.54,638.58 1070.77,639.54 1070.77,639.54 1070.60,638.79 1070.29,638.01 1070.03,637.22 1069.83,636.43 1069.69,635.65 1069.61,634.86 1069.61,634.08 1069.67,633.31 1069.81,632.56 1070.01,631.82 1070.30,631.12 1070.66,630.45 1071.10,629.83 1071.61,629.25" fill="#52b29a"/><polygon points="1071.63,627.94 1070.96,627.49 1070.21,627.19 1069.40,627.03 1068.56,627.02 1067.71,627.16 1066.87,627.48 1066.05,627.95 1065.30,628.59 1064.63,629.39 1064.06,630.33 1063.61,631.41 1063.32,632.60 1063.20,633.92 1063.39,635.47 1063.39,635.47 1063.81,634.81 1064.14,634.05 1064.51,633.30 1064.92,632.60 1065.38,631.95 1065.89,631.34 1066.43,630.78 1067.02,630.28 1067.65,629.85 1068.32,629.47 1069.02,629.18 1069.75,628.96 1070.49,628.83 1071.26,628.78" fill="#52b29a"/><polygon points="1072.20,627.87 1072.04,627.08 1071.73,626.33 1071.27,625.65 1070.69,625.05 1069.98,624.55 1069.16,624.17 1068.25,623.94 1067.27,623.86 1066.23,623.94 1065.16,624.21 1064.09,624.65 1063.03,625.29 1062.02,626.14 1061.06,627.37 1061.06,627.37 1061.81,627.20 1062.59,626.89 1063.38,626.63 1064.17,626.43 1064.95,626.29 1065.74,626.21 1066.52,626.21 1067.29,626.27 1068.04,626.41 1068.78,626.61 1069.48,626.90 1070.15,627.26 1070.77,627.70 1071.35,628.21" fill="#52b29a"/><polygon points="1072.66,628.23 1073.11,627.56 1073.41,626.81 1073.57,626.00 1073.58,625.16 1073.44,624.31 1073.12,623.47 1072.65,622.65 1072.01,621.90 1071.21,621.23 1070.27,620.66 1069.19,620.21 1068.00,619.92 1066.68,619.80 1065.13,619.99 1065.13,619.99 1065.79,620.41 1066.55,620.74 1067.30,621.11 1068.00,621.52 1068.65,621.98 1069.26,622.49 1069.82,623.03 1070.32,623.62 1070.75,624.25 1071.13,624.92 1071.42,625.62 1071.64,626.35 1071.77,627.09 1071.82,627.86" fill="#52b29a"/><circle cx="1072" cy="628.6" r="1.03" fill="#52b29a"/><circle cx="1072" cy="778.4" r="24.5" fill="#4169e1"/><g fill="#fff"><rect x="1066" y="768.5" width="12" height="8"/><rect x="1059.5" y="778" width="12" height="8"/><rect x="1072.5" y="778" width="12" height="8"/></g><g stroke="#4169e1" stroke-width="0.9"><path d="M1068.6,769.8v5.4"/><path d="M1071.1,769.8v5.4"/><path d="M1073.6,769.8v5.4"/><path d="M1076.1,769.8v5.4"/><path d="M1061.9,779.3v5.4"/><path d="M1064.4,779.3v5.4"/><path d="M1066.9,779.3v5.4"/><path d="M1069.4,779.3v5.4"/><path d="M1075,779.3v5.4"/><path d="M1077.5,779.3v5.4"/><path d="M1080,779.3v5.4"/><path d="M1082.5,779.3v5.4"/></g><circle cx="1238.7" cy="754" r="24.4" fill="#000"/><rect x="1228" y="743.6" width="22.7" height="21.8" rx="3.5" fill="#fff"/><path d="M1231.5,748.6l4.3,3l-4.3,3M1236.5,756.3h4.5" fill="none" stroke="#000" stroke-width="1.6"/><path d="M1868.3,614.9 L1941.3,663.3 L2014.3,614.9 L1941.3,760.3Z" fill="#4169e1"/><g fill="#fff"><rect x="1911.8" y="638.8" width="59" height="24.3" rx="2"/><rect x="1922.7" y="711.2" width="37.9" height="24.8" rx="2"/><path d="M1936,670.8h10.6v17.2h8.1l-13.4,19.6l-13.3,-19.6h8z"/></g><circle cx="1873.9" cy="660.9" r="24.2" fill="#52b29a"/><polygon points="1874.46,661.08 1875.11,660.71 1875.70,660.24 1876.23,659.68 1876.67,659.03 1877.02,658.31 1877.28,657.53 1877.43,656.69 1877.47,655.80 1877.39,654.89 1877.18,653.96 1876.86,653.03 1876.41,652.11 1875.83,651.22 1875.13,650.36 1881.58,651.95 1882.51,654.43 1882.40,655.53 1882.17,656.57 1881.84,657.55 1881.41,658.43 1880.90,659.23 1880.31,659.93 1879.66,660.53 1878.96,661.02 1878.22,661.39 1877.46,661.65 1876.69,661.80 1875.92,661.83 1875.18,661.74 1874.46,661.54" fill="#f2fffb" stroke="#f2fffb" stroke-width="0.3" stroke-linejoin="round"/><polygon points="1874.46,661.54 1875.18,661.74 1875.92,661.83 1876.69,661.80 1877.46,661.65 1878.22,661.39 1878.96,661.02 1879.66,660.53 1880.31,659.93 1880.90,659.23 1881.41,658.43 1881.84,657.55 1882.17,656.57 1882.40,655.53 1882.51,654.43 1885.94,660.12 1884.84,662.53 1883.98,663.23 1883.09,663.81 1882.17,664.26 1881.24,664.58 1880.31,664.79 1879.40,664.87 1878.51,664.83 1877.67,664.68 1876.89,664.42 1876.17,664.07 1875.52,663.63 1874.96,663.10 1874.49,662.51 1874.12,661.86" fill="#d5f4ec" stroke="#d5f4ec" stroke-width="0.3" stroke-linejoin="round"/><polygon points="1874.12,661.86 1874.49,662.51 1874.96,663.10 1875.52,663.63 1876.17,664.07 1876.89,664.42 1877.67,664.68 1878.51,664.83 1879.40,664.87 1880.31,664.79 1881.24,664.58 1882.17,664.26 1883.09,663.81 1883.98,663.23 1884.84,662.53 1883.25,668.98 1880.77,669.91 1879.67,669.80 1878.63,669.57 1877.65,669.24 1876.77,668.81 1875.97,668.30 1875.27,667.71 1874.67,667.06 1874.18,666.36 1873.81,665.62 1873.55,664.86 1873.40,664.09 1873.37,663.32 1873.46,662.58 1873.66,661.86" fill="#f2fffb" stroke="#f2fffb" stroke-width="0.3" stroke-linejoin="round"/><polygon points="1873.66,661.86 1873.46,662.58 1873.37,663.32 1873.40,664.09 1873.55,664.86 1873.81,665.62 1874.18,666.36 1874.67,667.06 1875.27,667.71 1875.97,668.30 1876.77,668.81 1877.65,669.24 1878.63,669.57 1879.67,669.80 1880.77,669.91 1875.08,673.34 1872.67,672.24 1871.97,671.38 1871.39,670.49 1870.94,669.57 1870.62,668.64 1870.41,667.71 1870.33,666.80 1870.37,665.91 1870.52,665.07 1870.78,664.29 1871.13,663.57 1871.57,662.92 1872.10,662.36 1872.69,661.89 1873.34,661.52" fill="#d5f4ec" stroke="#d5f4ec" stroke-width="0.3" stroke-linejoin="round"/><polygon points="1873.34,661.52 1872.69,661.89 1872.10,662.36 1871.57,662.92 1871.13,663.57 1870.78,664.29 1870.52,665.07 1870.37,665.91 1870.33,666.80 1870.41,667.71 1870.62,668.64 1870.94,669.57 1871.39,670.49 1871.97,671.38 1872.67,672.24 1866.22,670.65 1865.29,668.17 1865.40,667.07 1865.63,666.03 1865.96,665.05 1866.39,664.17 1866.90,663.37 1867.49,662.67 1868.14,662.07 1868.84,661.58 1869.58,661.21 1870.34,660.95 1871.11,660.80 1871.88,660.77 1872.62,660.86 1873.34,661.06" fill="#f2fffb" stroke="#f2fffb" stroke-width="0.3" stroke-linejoin="round"/><polygon points="1873.34,661.06 1872.62,660.86 1871.88,660.77 1871.11,660.80 1870.34,660.95 1869.58,661.21 1868.84,661.58 1868.14,662.07 1867.49,662.67 1866.90,663.37 1866.39,664.17 1865.96,665.05 1865.63,666.03 1865.40,667.07 1865.29,668.17 1861.86,662.48 1862.96,660.07 1863.82,659.37 1864.71,658.79 1865.63,658.34 1866.56,658.02 1867.49,657.81 1868.40,657.73 1869.29,657.77 1870.13,657.92 1870.91,658.18 1871.63,658.53 1872.28,658.97 1872.84,659.50 1873.31,660.09 1873.68,660.74" fill="#d5f4ec" stroke="#d5f4ec" stroke-width="0.3" stroke-linejoin="round"/><polygon points="1873.68,660.74 1873.31,660.09 1872.84,659.50 1872.28,658.97 1871.63,658.53 1870.91,658.18 1870.13,657.92 1869.29,657.77 1868.40,657.73 1867.49,657.81 1866.56,658.02 1865.63,658.34 1864.71,658.79 1863.82,659.37 1862.96,660.07 1864.55,653.62 1867.03,652.69 1868.13,652.80 1869.17,653.03 1870.15,653.36 1871.03,653.79 1871.83,654.30 1872.53,654.89 1873.13,655.54 1873.62,656.24 1873.99,656.98 1874.25,657.74 1874.40,658.51 1874.43,659.28 1874.34,660.02 1874.14,660.74" fill="#f2fffb" stroke="#f2fffb" stroke-width="0.3" stroke-linejoin="round"/><polygon points="1874.14,660.74 1874.34,660.02 1874.43,659.28 1874.40,658.51 1874.25,657.74 1873.99,656.98 1873.62,656.24 1873.13,655.54 1872.53,654.89 1871.83,654.30 1871.03,653.79 1870.15,653.36 1869.17,653.03 1868.13,652.80 1867.03,652.69 1872.72,649.26 1875.13,650.36 1875.83,651.22 1876.41,652.11 1876.86,653.03 1877.18,653.96 1877.39,654.89 1877.47,655.80 1877.43,656.69 1877.28,657.53 1877.02,658.31 1876.67,659.03 1876.23,659.68 1875.70,660.24 1875.11,660.71 1874.46,661.08" fill="#d5f4ec" stroke="#d5f4ec" stroke-width="0.3" stroke-linejoin="round"/><polygon points="1874.63,661.50 1875.42,661.34 1876.17,661.03 1876.85,660.57 1877.45,659.99 1877.95,659.28 1878.33,658.46 1878.56,657.55 1878.64,656.57 1878.56,655.53 1878.29,654.46 1877.85,653.39 1877.21,652.33 1876.36,651.32 1875.13,650.36 1875.13,650.36 1875.30,651.11 1875.61,651.89 1875.87,652.68 1876.07,653.47 1876.21,654.25 1876.29,655.04 1876.29,655.82 1876.23,656.59 1876.09,657.34 1875.89,658.08 1875.60,658.78 1875.24,659.45 1874.80,660.07 1874.29,660.65" fill="#52b29a"/><polygon points="1874.27,661.96 1874.94,662.41 1875.69,662.71 1876.50,662.87 1877.34,662.88 1878.19,662.74 1879.03,662.42 1879.85,661.95 1880.60,661.31 1881.27,660.51 1881.84,659.57 1882.29,658.49 1882.58,657.30 1882.70,655.98 1882.51,654.43 1882.51,654.43 1882.09,655.09 1881.76,655.85 1881.39,656.60 1880.98,657.30 1880.52,657.95 1880.01,658.56 1879.47,659.12 1878.88,659.62 1878.25,660.05 1877.58,660.43 1876.88,660.72 1876.15,660.94 1875.41,661.07 1874.64,661.12" fill="#52b29a"/><polygon points="1873.70,662.03 1873.86,662.82 1874.17,663.57 1874.63,664.25 1875.21,664.85 1875.92,665.35 1876.74,665.73 1877.65,665.96 1878.63,666.04 1879.67,665.96 1880.74,665.69 1881.81,665.25 1882.87,664.61 1883.88,663.76 1884.84,662.53 1884.84,662.53 1884.09,662.70 1883.31,663.01 1882.52,663.27 1881.73,663.47 1880.95,663.61 1880.16,663.69 1879.38,663.69 1878.61,663.63 1877.86,663.49 1877.12,663.29 1876.42,663.00 1875.75,662.64 1875.13,662.20 1874.55,661.69" fill="#52b29a"/><polygon points="1873.24,661.67 1872.79,662.34 1872.49,663.09 1872.33,663.90 1872.32,664.74 1872.46,665.59 1872.78,666.43 1873.25,667.25 1873.89,668.00 1874.69,668.67 1875.63,669.24 1876.71,669.69 1877.90,669.98 1879.22,670.10 1880.77,669.91 1880.77,669.91 1880.11,669.49 1879.35,669.16 1878.60,668.79 1877.90,668.38 1877.25,667.92 1876.64,667.41 1876.08,666.87 1875.58,666.28 1875.15,665.65 1874.77,664.98 1874.48,664.28 1874.26,663.55 1874.13,662.81 1874.08,662.04" fill="#52b29a"/><polygon points="1873.17,661.10 1872.38,661.26 1871.63,661.57 1870.95,662.03 1870.35,662.61 1869.85,663.32 1869.47,664.14 1869.24,665.05 1869.16,666.03 1869.24,667.07 1869.51,668.14 1869.95,669.21 1870.59,670.27 1871.44,671.28 1872.67,672.24 1872.67,672.24 1872.50,671.49 1872.19,670.71 1871.93,669.92 1871.73,669.13 1871.59,668.35 1871.51,667.56 1871.51,666.78 1871.57,666.01 1871.71,665.26 1871.91,664.52 1872.20,663.82 1872.56,663.15 1873.00,662.53 1873.51,661.95" fill="#52b29a"/><polygon points="1873.53,660.64 1872.86,660.19 1872.11,659.89 1871.30,659.73 1870.46,659.72 1869.61,659.86 1868.77,660.18 1867.95,660.65 1867.20,661.29 1866.53,662.09 1865.96,663.03 1865.51,664.11 1865.22,665.30 1865.10,666.62 1865.29,668.17 1865.29,668.17 1865.71,667.51 1866.04,666.75 1866.41,666.00 1866.82,665.30 1867.28,664.65 1867.79,664.04 1868.33,663.48 1868.92,662.98 1869.55,662.55 1870.22,662.17 1870.92,661.88 1871.65,661.66 1872.39,661.53 1873.16,661.48" fill="#52b29a"/><polygon points="1874.10,660.57 1873.94,659.78 1873.63,659.03 1873.17,658.35 1872.59,657.75 1871.88,657.25 1871.06,656.87 1870.15,656.64 1869.17,656.56 1868.13,656.64 1867.06,656.91 1865.99,657.35 1864.93,657.99 1863.92,658.84 1862.96,660.07 1862.96,660.07 1863.71,659.90 1864.49,659.59 1865.28,659.33 1866.07,659.13 1866.85,658.99 1867.64,658.91 1868.42,658.91 1869.19,658.97 1869.94,659.11 1870.68,659.31 1871.38,659.60 1872.05,659.96 1872.67,660.40 1873.25,660.91" fill="#52b29a"/><polygon points="1874.56,660.93 1875.01,660.26 1875.31,659.51 1875.47,658.70 1875.48,657.86 1875.34,657.01 1875.02,656.17 1874.55,655.35 1873.91,654.60 1873.11,653.93 1872.17,653.36 1871.09,652.91 1869.90,652.62 1868.58,652.50 1867.03,652.69 1867.03,652.69 1867.69,653.11 1868.45,653.44 1869.20,653.81 1869.90,654.22 1870.55,654.68 1871.16,655.19 1871.72,655.73 1872.22,656.32 1872.65,656.95 1873.03,657.62 1873.32,658.32 1873.54,659.05 1873.67,659.79 1873.72,660.56" fill="#52b29a"/><circle cx="1873.9" cy="661.3" r="1.03" fill="#52b29a"/></svg><div class="lbl" style="left:230.9px;top:797.8px;width:272.8px;height:80.8px"></div><span class="t" style="left:239.4px;top:804.4px;font-size:32px;color:rgba(0,0,0,.88);letter-spacing:0.68px;">service–nodeport</span><span class="t" style="left:308.6px;top:834.9px;font-size:32px;color:rgba(0,0,0,.88);letter-spacing:-0.39px;">(Service)</span><div class="lbl" style="left:1125px;top:781px;width:93.9px;height:48.7px"></div><span class="t" style="left:1132.6px;top:787.4px;font-size:32px;color:rgba(0,0,0,.88);letter-spacing:-0.07px;">nginx</span><div class="lbl" style="left:1109.4px;top:883.4px;width:125.4px;height:80.6px"></div><span class="t" style="left:1115.6px;top:887.1px;font-size:32px;color:rgba(0,0,0,.88);letter-spacing:2.58px;">pod–gf</span><span class="t" style="left:1136.7px;top:921.3px;font-size:32px;color:rgba(0,0,0,.88);letter-spacing:0.25px;">(Pod)</span><div class="lbl" style="left:1750.3px;top:781.2px;width:340px;height:81.2px"></div><span class="t" style="left:1758.8px;top:786.6px;font-size:32px;color:rgba(0,0,0,.88);letter-spacing:0.49px;">service–nodeport–c84</span><span class="t" style="left:1836.9px;top:819.2px;font-size:32px;color:rgba(0,0,0,.88);">(EndpointSlice)</span><div class="lbl" style="left:1410.1px;top:1017.4px;width:211.5px;height:81.4px"></div><span class="t" style="left:1466.0px;top:1023.9px;font-size:32px;color:rgba(0,0,0,.88);letter-spacing:0.46px;">default</span><span class="t" style="left:1425.0px;top:1056.9px;font-size:32px;color:rgba(0,0,0,.88);letter-spacing:-0.23px;">(Namespace)</span>
<div class="a" style="left:1515.8px;top:200px;width:212.4px;height:71.8px;border-radius:0 0 15px 15px;overflow:hidden"><div class="a" style="left:0;top:0;width:100.4px;height:72px;background:#1f1f1f"></div><div class="a" style="left:100.4px;top:0;width:112px;height:72px;background:rgba(42,84,78,.5)"></div></div><svg width="220" height="72" viewBox="1515.8 200 220 72" style="left:1515.8px;top:200px"><polygon points="1566.94,239.37 1567.91,238.81 1568.80,238.11 1569.58,237.27 1570.24,236.31 1570.77,235.23 1571.15,234.05 1571.38,232.80 1571.43,231.48 1571.31,230.11 1571.01,228.73 1570.52,227.33 1569.85,225.95 1568.99,224.61 1567.94,223.33 1577.59,225.71 1578.97,229.42 1578.81,231.07 1578.47,232.63 1577.97,234.08 1577.33,235.41 1576.56,236.61 1575.68,237.66 1574.71,238.55 1573.66,239.28 1572.56,239.84 1571.43,240.23 1570.27,240.44 1569.13,240.49 1568.01,240.36 1566.93,240.06" fill="#f4f4f4" stroke="#f4f4f4" stroke-width="0.3" stroke-linejoin="round"/><polygon points="1566.93,240.06 1568.01,240.36 1569.13,240.49 1570.27,240.44 1571.43,240.23 1572.56,239.84 1573.66,239.28 1574.71,238.55 1575.68,237.66 1576.56,236.61 1577.33,235.41 1577.97,234.08 1578.47,232.63 1578.81,231.07 1578.97,229.42 1584.11,237.93 1582.47,241.54 1581.19,242.59 1579.85,243.45 1578.47,244.12 1577.07,244.61 1575.69,244.91 1574.32,245.03 1573.00,244.98 1571.75,244.75 1570.57,244.37 1569.49,243.84 1568.53,243.18 1567.69,242.40 1566.99,241.51 1566.43,240.54" fill="#c6c6c6" stroke="#c6c6c6" stroke-width="0.3" stroke-linejoin="round"/><polygon points="1566.43,240.54 1566.99,241.51 1567.69,242.40 1568.53,243.18 1569.49,243.84 1570.57,244.37 1571.75,244.75 1573.00,244.98 1574.32,245.03 1575.69,244.91 1577.07,244.61 1578.47,244.12 1579.85,243.45 1581.19,242.59 1582.47,241.54 1580.09,251.19 1576.38,252.57 1574.73,252.41 1573.17,252.07 1571.72,251.57 1570.39,250.93 1569.19,250.16 1568.14,249.28 1567.25,248.31 1566.52,247.26 1565.96,246.16 1565.57,245.03 1565.36,243.87 1565.31,242.73 1565.44,241.61 1565.74,240.53" fill="#f4f4f4" stroke="#f4f4f4" stroke-width="0.3" stroke-linejoin="round"/><polygon points="1565.74,240.53 1565.44,241.61 1565.31,242.73 1565.36,243.87 1565.57,245.03 1565.96,246.16 1566.52,247.26 1567.25,248.31 1568.14,249.28 1569.19,250.16 1570.39,250.93 1571.72,251.57 1573.17,252.07 1574.73,252.41 1576.38,252.57 1567.87,257.71 1564.26,256.07 1563.21,254.79 1562.35,253.45 1561.68,252.07 1561.19,250.67 1560.89,249.29 1560.77,247.92 1560.82,246.60 1561.05,245.35 1561.43,244.17 1561.96,243.09 1562.62,242.13 1563.40,241.29 1564.29,240.59 1565.26,240.03" fill="#c6c6c6" stroke="#c6c6c6" stroke-width="0.3" stroke-linejoin="round"/><polygon points="1565.26,240.03 1564.29,240.59 1563.40,241.29 1562.62,242.13 1561.96,243.09 1561.43,244.17 1561.05,245.35 1560.82,246.60 1560.77,247.92 1560.89,249.29 1561.19,250.67 1561.68,252.07 1562.35,253.45 1563.21,254.79 1564.26,256.07 1554.61,253.69 1553.23,249.98 1553.39,248.33 1553.73,246.77 1554.23,245.32 1554.87,243.99 1555.64,242.79 1556.52,241.74 1557.49,240.85 1558.54,240.12 1559.64,239.56 1560.77,239.17 1561.93,238.96 1563.07,238.91 1564.19,239.04 1565.27,239.34" fill="#f4f4f4" stroke="#f4f4f4" stroke-width="0.3" stroke-linejoin="round"/><polygon points="1565.27,239.34 1564.19,239.04 1563.07,238.91 1561.93,238.96 1560.77,239.17 1559.64,239.56 1558.54,240.12 1557.49,240.85 1556.52,241.74 1555.64,242.79 1554.87,243.99 1554.23,245.32 1553.73,246.77 1553.39,248.33 1553.23,249.98 1548.09,241.47 1549.73,237.86 1551.01,236.81 1552.35,235.95 1553.73,235.28 1555.13,234.79 1556.51,234.49 1557.88,234.37 1559.20,234.42 1560.45,234.65 1561.63,235.03 1562.71,235.56 1563.67,236.22 1564.51,237.00 1565.21,237.89 1565.77,238.86" fill="#c6c6c6" stroke="#c6c6c6" stroke-width="0.3" stroke-linejoin="round"/><polygon points="1565.77,238.86 1565.21,237.89 1564.51,237.00 1563.67,236.22 1562.71,235.56 1561.63,235.03 1560.45,234.65 1559.20,234.42 1557.88,234.37 1556.51,234.49 1555.13,234.79 1553.73,235.28 1552.35,235.95 1551.01,236.81 1549.73,237.86 1552.11,228.21 1555.82,226.83 1557.47,226.99 1559.03,227.33 1560.48,227.83 1561.81,228.47 1563.01,229.24 1564.06,230.12 1564.95,231.09 1565.68,232.14 1566.24,233.24 1566.63,234.37 1566.84,235.53 1566.89,236.67 1566.76,237.79 1566.46,238.87" fill="#f4f4f4" stroke="#f4f4f4" stroke-width="0.3" stroke-linejoin="round"/><polygon points="1566.46,238.87 1566.76,237.79 1566.89,236.67 1566.84,235.53 1566.63,234.37 1566.24,233.24 1565.68,232.14 1564.95,231.09 1564.06,230.12 1563.01,229.24 1561.81,228.47 1560.48,227.83 1559.03,227.33 1557.47,226.99 1555.82,226.83 1564.33,221.69 1567.94,223.33 1568.99,224.61 1569.85,225.95 1570.52,227.33 1571.01,228.73 1571.31,230.11 1571.43,231.48 1571.38,232.80 1571.15,234.05 1570.77,235.23 1570.24,236.31 1569.58,237.27 1568.80,238.11 1567.91,238.81 1566.94,239.37" fill="#c6c6c6" stroke="#c6c6c6" stroke-width="0.3" stroke-linejoin="round"/><polygon points="1567.19,240.00 1568.38,239.77 1569.49,239.29 1570.51,238.61 1571.41,237.74 1572.16,236.68 1572.72,235.46 1573.07,234.10 1573.20,232.62 1573.07,231.07 1572.67,229.47 1572.00,227.86 1571.05,226.28 1569.78,224.77 1567.94,223.33 1567.94,223.33 1568.20,224.46 1568.65,225.63 1569.05,226.80 1569.35,227.98 1569.56,229.16 1569.67,230.34 1569.68,231.50 1569.59,232.65 1569.38,233.78 1569.07,234.88 1568.64,235.94 1568.10,236.93 1567.45,237.86 1566.69,238.73" fill="#212121"/><polygon points="1566.66,240.69 1567.66,241.36 1568.78,241.81 1569.99,242.05 1571.24,242.07 1572.52,241.85 1573.78,241.38 1574.99,240.67 1576.12,239.71 1577.13,238.52 1577.98,237.11 1578.65,235.50 1579.09,233.71 1579.26,231.74 1578.97,229.42 1578.97,229.42 1578.36,230.41 1577.85,231.55 1577.30,232.66 1576.68,233.71 1576.00,234.69 1575.25,235.60 1574.43,236.43 1573.55,237.18 1572.61,237.84 1571.61,238.39 1570.56,238.84 1569.47,239.16 1568.35,239.35 1567.20,239.43" fill="#212121"/><polygon points="1565.80,240.79 1566.03,241.98 1566.51,243.09 1567.19,244.11 1568.06,245.01 1569.12,245.76 1570.34,246.32 1571.70,246.67 1573.18,246.80 1574.73,246.67 1576.33,246.27 1577.94,245.60 1579.52,244.65 1581.03,243.38 1582.47,241.54 1582.47,241.54 1581.34,241.80 1580.17,242.25 1579.00,242.65 1577.82,242.95 1576.64,243.16 1575.46,243.27 1574.30,243.28 1573.15,243.19 1572.02,242.98 1570.92,242.67 1569.86,242.24 1568.87,241.70 1567.94,241.05 1567.07,240.29" fill="#212121"/><polygon points="1565.11,240.26 1564.44,241.26 1563.99,242.38 1563.75,243.59 1563.73,244.84 1563.95,246.12 1564.42,247.38 1565.13,248.59 1566.09,249.72 1567.28,250.73 1568.69,251.58 1570.30,252.25 1572.09,252.69 1574.06,252.86 1576.38,252.57 1576.38,252.57 1575.39,251.96 1574.25,251.45 1573.14,250.90 1572.09,250.28 1571.11,249.60 1570.20,248.85 1569.37,248.03 1568.62,247.15 1567.96,246.21 1567.41,245.21 1566.96,244.16 1566.64,243.07 1566.45,241.95 1566.37,240.80" fill="#212121"/><polygon points="1565.01,239.40 1563.82,239.63 1562.71,240.11 1561.69,240.79 1560.79,241.66 1560.04,242.72 1559.48,243.94 1559.13,245.30 1559.00,246.78 1559.13,248.33 1559.53,249.93 1560.20,251.54 1561.15,253.12 1562.42,254.63 1564.26,256.07 1564.26,256.07 1564.00,254.94 1563.55,253.77 1563.15,252.60 1562.85,251.42 1562.64,250.24 1562.53,249.06 1562.52,247.90 1562.61,246.75 1562.82,245.62 1563.13,244.52 1563.56,243.46 1564.10,242.47 1564.75,241.54 1565.51,240.67" fill="#212121"/><polygon points="1565.54,238.71 1564.54,238.04 1563.42,237.59 1562.21,237.35 1560.96,237.33 1559.68,237.55 1558.42,238.02 1557.21,238.73 1556.08,239.69 1555.07,240.88 1554.22,242.29 1553.55,243.90 1553.11,245.69 1552.94,247.66 1553.23,249.98 1553.23,249.98 1553.84,248.99 1554.35,247.85 1554.90,246.74 1555.52,245.69 1556.20,244.71 1556.95,243.80 1557.77,242.97 1558.65,242.22 1559.59,241.56 1560.59,241.01 1561.64,240.56 1562.73,240.24 1563.85,240.05 1565.00,239.97" fill="#212121"/><polygon points="1566.40,238.61 1566.17,237.42 1565.69,236.31 1565.01,235.29 1564.14,234.39 1563.08,233.64 1561.86,233.08 1560.50,232.73 1559.02,232.60 1557.47,232.73 1555.87,233.13 1554.26,233.80 1552.68,234.75 1551.17,236.02 1549.73,237.86 1549.73,237.86 1550.86,237.60 1552.03,237.15 1553.20,236.75 1554.38,236.45 1555.56,236.24 1556.74,236.13 1557.90,236.12 1559.05,236.21 1560.18,236.42 1561.28,236.73 1562.34,237.16 1563.33,237.70 1564.26,238.35 1565.13,239.11" fill="#212121"/><polygon points="1567.09,239.14 1567.76,238.14 1568.21,237.02 1568.45,235.81 1568.47,234.56 1568.25,233.28 1567.78,232.02 1567.07,230.81 1566.11,229.68 1564.92,228.67 1563.51,227.82 1561.90,227.15 1560.11,226.71 1558.14,226.54 1555.82,226.83 1555.82,226.83 1556.81,227.44 1557.95,227.95 1559.06,228.50 1560.11,229.12 1561.09,229.80 1562.00,230.55 1562.83,231.37 1563.58,232.25 1564.24,233.19 1564.79,234.19 1565.24,235.24 1565.56,236.33 1565.75,237.45 1565.83,238.60" fill="#212121"/><circle cx="1566.1" cy="239.7" r="1.54" fill="#212121"/><g fill="#424c53"><path d="M1652.9,264 v-17 q0,-7.3 7.3,-7.3 h23.8 q7.3,0 7.3,7.3 v14 q0,3 -3,3z"/><rect x="1668" y="236" width="8.2" height="6"/><circle cx="1672.1" cy="228.3" r="10"/></g><path d="M1660.6,228.6 a11.5,11.5 0 0 1 23,0" fill="none" stroke="#89969d" stroke-width="1.5"/><rect x="1655.8" y="225.4" width="5.6" height="9" rx="2.6" fill="#7f8c93"/><rect x="1682.8" y="225.4" width="5.4" height="9" rx="2.6" fill="#7f8c93"/><path d="M1685.2,233.4 q-2.4,2.2 -14,2" fill="none" stroke="#89969d" stroke-width="1.4"/><circle cx="1672.1" cy="253.5" r="7" fill="none" stroke="#5fd3b5" stroke-width="2" stroke-dasharray="8.2 2.8" stroke-dashoffset="3"/></svg>
<div class="a" style="left:0;top:0;width:2904px;height:4.2px;background:linear-gradient(to bottom,#3c3b3b 0,#3c3b3b 50%,#484b4d 60%,#484b4d 100%)"></div><div class="a" style="left:130.3px;top:4px;width:2774px;height:200.3px;background:#212121"></div><div class="a" style="left:130.3px;top:204.2px;width:2774px;height:4.6px;background:linear-gradient(to bottom,#2d5853 0,#2d5853 40%,rgba(40,80,75,.0) 100%)"></div><div class="a" style="left:130.3px;top:205.6px;width:2774px;height:9px;background:linear-gradient(to bottom,rgba(0,0,0,.0),rgba(0,0,0,.22) 40%,rgba(0,0,0,0))"></div><svg width="2904" height="210" viewBox="0 0 2904 210" style="left:0;top:0"><polygon points="192.7,103.9 192.7,68.3 224.7,86.1" fill="#5dd3b0"/><polygon points="192.7,103.9 224.7,86.1 224.7,121.7" fill="#4fb6a6"/><polygon points="192.7,103.9 224.7,121.7 192.7,139.5" fill="#5dd3b0"/><polygon points="192.7,103.9 192.7,139.5 160.7,121.7" fill="#4fb6a6"/><polygon points="192.7,103.9 160.7,121.7 160.7,86.1" fill="#5dd3b0"/><polygon points="192.7,103.9 160.7,86.1 192.7,68.3" fill="#4fb6a6"/><line x1="192.7" y1="103.9" x2="192.7" y2="66.5" stroke="#212121" stroke-width="4.4"/><line x1="192.7" y1="103.9" x2="226.3" y2="85.2" stroke="#212121" stroke-width="4.4"/><line x1="192.7" y1="103.9" x2="226.3" y2="122.6" stroke="#212121" stroke-width="4.4"/><line x1="192.7" y1="103.9" x2="192.7" y2="141.3" stroke="#212121" stroke-width="4.4"/><line x1="192.7" y1="103.9" x2="159.1" y2="122.6" stroke="#212121" stroke-width="4.4"/><line x1="192.7" y1="103.9" x2="159.1" y2="85.2" stroke="#212121" stroke-width="4.4"/><polygon points="243.9,85.1 253.0,85.1 253.0,127.3 243.9,127.3" fill="#d9d9d9"/><polygon points="253.0,102.0 276.4,85.1 287.6,85.1 253.0,114.5" fill="#d9d9d9"/><polygon points="260.3,111.1 267.4,105.1 287.6,127.3 275.6,127.3" fill="#d9d9d9"/><path fill="#d9d9d9" fill-rule="evenodd" d="M304.06,85.1 L314.24,85.1 L329.85,127.3 L288,127.3 Z M308.4,99.2 L315.76,117.66 L302.97,117.66 Z"/><path d="M302.9,117.6 L298.9,127.6" stroke="#212121" stroke-width="1.9"/><path fill="#d9d9d9" d="M329.85,85.1 L365.4,85.1 Q374.93,85.1 374.93,94.7 L374.93,127.3 L364.96,127.3 L364.96,94.9 L329.85,94.9 Z"/><polygon points="333.1,96.9 342.6,96.9 342.6,127.3 333.1,127.3" fill="#d9d9d9"/><polygon points="375.8,85.1 386.4,85.1 395.6,111.2 406.2,85.1 416.3,85.1 400.0,127.3 390.7,127.3" fill="#d9d9d9"/><path fill="#d9d9d9" fill-rule="evenodd" d="M422.5,85.1 L432.6,85.1 L449.2,127.3 L406.5,127.3 Z M427.4,99.5 L434.8,118.2 L420.3,118.2 Z"/><path d="M421.2,117.8 L417,127.6" stroke="#212121" stroke-width="1.8"/><path fill="#d9d9d9" d="M494,85.1 L494,94.3 L462.5,94.3 Q460.3,94.3 460.3,96.5 L460.3,99.2 Q460.3,101.4 462.5,101.4 L485,101.4 Q494,101.4 494,110 L494,118.5 Q494,127.3 485,127.3 L451.8,127.3 L451.8,118.2 L483,118.2 Q485,118.2 485,116.2 L485,113.2 Q485,111.2 483,111.2 L460,111.2 Q451.3,111.2 451.3,102.5 L451.3,94 Q451.3,85.1 460,85.1 Z"/><g fill="#fff"><rect x="573.5" y="78" width="15.2" height="2.4"/><rect x="567.2" y="81.5" width="27.3" height="2.9"/><rect x="570" y="84.3" width="21.5" height="45.4"/><rect x="553" y="95.2" width="18" height="2.6"/><rect x="591" y="95.2" width="18" height="2.6"/><rect x="554.2" y="98.8" width="16" height="30.9"/><rect x="591.4" y="98.8" width="16.4" height="30.9"/></g><g fill="#212121"><rect x="574.2" y="87.8" width="5.2" height="4.7"/><rect x="574.2" y="95.9" width="5.2" height="4.7"/><rect x="574.2" y="104.5" width="5.2" height="4.7"/><rect x="582.4" y="87.8" width="5.2" height="4.7"/><rect x="582.4" y="95.9" width="5.2" height="4.7"/><rect x="582.4" y="104.5" width="5.2" height="4.7"/><rect x="558.4" y="101.7" width="5.4" height="4.7"/><rect x="558.4" y="110.3" width="5.4" height="4.7"/><rect x="558.4" y="119.2" width="5.4" height="4.7"/><rect x="598.5" y="101.7" width="5.4" height="4.7"/><rect x="598.5" y="110.3" width="5.4" height="4.7"/><rect x="598.5" y="119.2" width="5.4" height="4.7"/><path d="M574.7,129.7 V120.5 a6.4,6.6 0 0 1 12.8,0 V129.7Z"/></g><g fill="#fff"><path d="M734.7,76 q2.6,0 4,2.4 l10,17.5 q2.2,4.7 -3,4.7 h-22 q-5.2,0 -3,-4.7 l10,-17.5 q1.4,-2.4 4,-2.4z"/><rect x="708" y="106.9" width="24.4" height="23.9" rx="5"/><circle cx="749.9" cy="118.7" r="12.1"/></g><g fill="none" stroke="#fff" stroke-width="2.6" stroke-linecap="round" stroke-linejoin="round"><path d="M1498.4,118.4 H1526.4 A8.5,8.5 0 0 0 1530.95,102.72 A13.6,13.6 0 1 0 1503.81,101.09 A9.5,9.5 0 1 0 1498.4,118.4 Z"/><path d="M1504.6,106.2 l5.3,4.7 l9.4,-10.6"/></g><g stroke="#fff" stroke-width="1.9" stroke-linecap="round"><line x1="648.6" y1="125.5" x2="667.7" y2="83.3"/><line x1="801.4" y1="125.5" x2="820.9" y2="83.3"/></g><defs><clipPath id="av1"><circle cx="2438.8" cy="103.8" r="32.4"/></clipPath></defs><circle cx="2438.8" cy="103.8" r="35" fill="#fff"/><g clip-path="url(#av1)"><g transform="translate(2438.8,103.8) scale(0.05775) translate(-649,-643)"><rect x="60" y="60" width="1180" height="1180" fill="#8b4a3b"/><path d="M440,60 H1100 L1060,250 Q960,270 900,230 Q800,250 740,200 Q680,160 600,190 Q520,170 470,130 Z" fill="#cba89e"/><path d="M760,190 Q820,140 900,160 Q960,200 900,230 Q820,240 760,190Z" fill="#8b4a3b"/><circle cx="965" cy="345" r="105" fill="#a55f4c"/><circle cx="1060" cy="300" r="70" fill="#c9a59b"/><path d="M60,600 Q200,600 290,700 Q340,800 350,1000 L380,1240 H60Z" fill="#70362a"/><path d="M130,840 Q220,820 240,900" stroke="#5a2a20" stroke-width="14" fill="none"/><circle cx="210" cy="742" r="22" fill="#5a2a20"/><path d="M860,780 H1240 V1240 H860Z" fill="#7d3c2e"/><path d="M860,880 H1240 M880,980 H1240 M940,780 V880 M1020,880 V980" stroke="#9a5846" stroke-width="10"/><path d="M1030,560 Q1060,450 1150,420 L1200,430 L1190,700 L1060,760 Q1010,680 1030,560Z" fill="#6b707e"/><path d="M1100,480 L1150,450 L1160,560 Z" fill="#a9adb8"/><path d="M1050,740 L1130,700" stroke="#dcd6d6" stroke-width="18"/><path d="M1130,560 Q1240,600 1240,780 L1120,760Z" fill="#b58f86"/><path d="M555,760 Q600,690 700,670 L1040,600 L1060,760 L900,790 L690,800 L680,1010 L555,1010Z" fill="#a8857d"/><path d="M790,600 Q830,540 910,545 Q950,580 900,620 Q860,670 800,650Z" fill="#ead6d0"/><path d="M330,700 L560,760 L555,1010 L570,1180 L380,1160 Q340,900 330,700Z" fill="#0b090a"/><path d="M690,805 Q860,780 890,840 L880,1160 L640,1190 L680,1010Z" fill="#0b090a"/><rect x="570" y="1010" width="72" height="200" fill="#f1e7e2"/><path d="M130,565 L255,420 L405,232 L425,335 L560,330 L610,385 L570,405 L805,492 L705,522 L765,612 L640,565 L625,670 L440,760 L330,720 L285,600 Z" fill="#0b090a"/><path d="M370,445 L560,470 L628,668 L445,742 L288,602 L420,545 L335,500 Z" fill="#f0e3dd"/><circle cx="468" cy="515" r="9" fill="#4a3630"/><circle cx="383" cy="628" r="9" fill="#4a3630"/><path d="M500,600 Q505,640 470,655" stroke="#8a6a60" stroke-width="7" fill="none"/></g></g><polygon points="2545.6,82.8 2562.6,91.0 2566.9,109.5 2555.1,124.2 2536.1,124.2 2524.3,109.5 2528.6,91.0" fill="#3970e4" stroke="#fff" stroke-width="1.8" stroke-linejoin="round"/><g stroke="#fff" fill="none"><circle cx="2545.6" cy="104.6" r="10.0" stroke-width="2.3"/><line x1="2545.6" y1="101.8" x2="2545.6" y2="88.9" stroke-width="2" stroke-linecap="round"/><line x1="2547.8" y1="102.8" x2="2557.9" y2="94.8" stroke-width="2" stroke-linecap="round"/><line x1="2548.4" y1="105.2" x2="2560.9" y2="108.1" stroke-width="2" stroke-linecap="round"/><line x1="2546.8" y1="107.2" x2="2552.4" y2="118.7" stroke-width="2" stroke-linecap="round"/><line x1="2544.4" y1="107.2" x2="2538.8" y2="118.7" stroke-width="2" stroke-linecap="round"/><line x1="2542.8" y1="105.2" x2="2530.3" y2="108.1" stroke-width="2" stroke-linecap="round"/><line x1="2543.4" y1="102.8" x2="2533.3" y2="94.8" stroke-width="2" stroke-linecap="round"/></g><circle cx="2545.6" cy="104.6" r="2.4" fill="#fff"/><circle cx="2573" cy="91.3" r="20.9" fill="#fff"/><circle cx="2641.8" cy="103.8" r="20" fill="#fff"/><rect x="2640" y="94.4" width="3.8" height="13" fill="#111"/><rect x="2640" y="109.6" width="3.8" height="4.2" fill="#111"/><rect x="2641.4" y="59.8" width="49.5" height="40.2" rx="20.1" fill="#e63b2a"/><defs><clipPath id="av2"><circle cx="2738.2" cy="103.8" r="36.5"/></clipPath></defs><g clip-path="url(#av2)"><g transform="translate(2738.2,103.8) scale(0.06506) translate(-649,-643)"><rect x="60" y="60" width="1180" height="1180" fill="#8b4a3b"/><path d="M440,60 H1100 L1060,250 Q960,270 900,230 Q800,250 740,200 Q680,160 600,190 Q520,170 470,130 Z" fill="#cba89e"/><path d="M760,190 Q820,140 900,160 Q960,200 900,230 Q820,240 760,190Z" fill="#8b4a3b"/><circle cx="965" cy="345" r="105" fill="#a55f4c"/><circle cx="1060" cy="300" r="70" fill="#c9a59b"/><path d="M60,600 Q200,600 290,700 Q340,800 350,1000 L380,1240 H60Z" fill="#70362a"/><path d="M130,840 Q220,820 240,900" stroke="#5a2a20" stroke-width="14" fill="none"/><circle cx="210" cy="742" r="22" fill="#5a2a20"/><path d="M860,780 H1240 V1240 H860Z" fill="#7d3c2e"/><path d="M860,880 H1240 M880,980 H1240 M940,780 V880 M1020,880 V980" stroke="#9a5846" stroke-width="10"/><path d="M1030,560 Q1060,450 1150,420 L1200,430 L1190,700 L1060,760 Q1010,680 1030,560Z" fill="#6b707e"/><path d="M1100,480 L1150,450 L1160,560 Z" fill="#a9adb8"/><path d="M1050,740 L1130,700" stroke="#dcd6d6" stroke-width="18"/><path d="M1130,560 Q1240,600 1240,780 L1120,760Z" fill="#b58f86"/><path d="M555,760 Q600,690 700,670 L1040,600 L1060,760 L900,790 L690,800 L680,1010 L555,1010Z" fill="#a8857d"/><path d="M790,600 Q830,540 910,545 Q950,580 900,620 Q860,670 800,650Z" fill="#ead6d0"/><path d="M330,700 L560,760 L555,1010 L570,1180 L380,1160 Q340,900 330,700Z" fill="#0b090a"/><path d="M690,805 Q860,780 890,840 L880,1160 L640,1190 L680,1010Z" fill="#0b090a"/><rect x="570" y="1010" width="72" height="200" fill="#f1e7e2"/><path d="M130,565 L255,420 L405,232 L425,335 L560,330 L610,385 L570,405 L805,492 L705,522 L765,612 L640,565 L625,670 L440,760 L330,720 L285,600 Z" fill="#0b090a"/><path d="M370,445 L560,470 L628,668 L445,742 L288,602 L420,545 L335,500 Z" fill="#f0e3dd"/><circle cx="468" cy="515" r="9" fill="#4a3630"/><circle cx="383" cy="628" r="9" fill="#4a3630"/><path d="M500,600 Q505,640 470,655" stroke="#8a6a60" stroke-width="7" fill="none"/></g></g><g fill="#fff"><rect x="2812.8" y="89.8" width="42.6" height="4.7"/><rect x="2812.8" y="101.6" width="42.6" height="4.7"/><rect x="2812.8" y="113.4" width="42.6" height="4.8"/></g></svg><span class="t" style="left:831.1px;top:88.3px;font-size:31.5px;color:rgba(255,255,255,.9);letter-spacing:-0.50px;">[Tutorial]</span><span class="t" style="left:954.4px;top:88.3px;font-size:31.5px;color:rgba(255,255,255,.9);letter-spacing:0.08px;">Exploring</span><span class="t" style="left:1093.0px;top:88.3px;font-size:31.5px;color:rgba(255,255,255,.9);letter-spacing:0.01px;">Kubernetes</span><span class="t" style="left:1261.4px;top:88.3px;font-size:31.5px;color:rgba(255,255,255,.9);letter-spacing:0.03px;">Services-View</span><span class="t" style="left:2566.5px;top:80.8px;font-size:21.8px;color:#000;">2</span><span class="t" style="left:2653.8px;top:69.2px;font-size:22.5px;color:#fff;letter-spacing:0.26px;">22</span>
<div class="a" style="left:0;top:4px;width:128.6px;height:1452px;background:#2c343a"></div><div class="a" style="left:128.6px;top:4px;width:1.7px;height:1452px;background:#464f55"></div><div class="a" style="left:0;top:183.6px;width:128.6px;height:1.6px;background:#434c52"></div><div class="a" style="left:0;top:581.4px;width:128.6px;height:1.6px;background:#434c52"></div><div class="a" style="left:0;top:691.6px;width:128.6px;height:1.6px;background:#434c52"></div><svg width="130" height="1456" viewBox="0 0 130 1456" style="left:0;top:0"><defs><clipPath id="mlc"><circle cx="57.8" cy="102" r="40.4"/></clipPath></defs><g clip-path="url(#mlc)"><circle cx="57.8" cy="102" r="40.4" fill="#5cd2b0"/><polygon points="17.0,7.8 17.0,31.3 -3.4,19.6" fill="#4fb7a7"/><polygon points="17.0,31.3 17.0,54.9 -3.4,43.1" fill="#4fb7a7"/><polygon points="17.0,54.9 17.0,78.5 -3.4,66.7" fill="#4fb7a7"/><polygon points="17.0,78.5 17.0,102.0 -3.4,90.2" fill="#4fb7a7"/><polygon points="17.0,102.0 17.0,125.5 -3.4,113.8" fill="#4fb7a7"/><polygon points="17.0,125.5 17.0,149.1 -3.4,137.3" fill="#4fb7a7"/><polygon points="17.0,149.1 17.0,172.7 -3.4,160.9" fill="#4fb7a7"/><polygon points="37.4,19.6 37.4,43.1 17.0,31.4" fill="#4fb7a7"/><polygon points="37.4,43.1 37.4,66.7 17.0,54.9" fill="#4fb7a7"/><polygon points="37.4,66.7 37.4,90.2 17.0,78.5" fill="#4fb7a7"/><polygon points="37.4,90.2 37.4,113.8 17.0,102.0" fill="#4fb7a7"/><polygon points="37.4,113.8 37.4,137.3 17.0,125.6" fill="#4fb7a7"/><polygon points="37.4,137.3 37.4,160.9 17.0,149.1" fill="#4fb7a7"/><polygon points="37.4,160.9 37.4,184.4 17.0,172.7" fill="#4fb7a7"/><polygon points="57.8,31.3 57.8,54.9 37.4,43.1" fill="#4fb7a7"/><polygon points="57.8,54.9 57.8,78.5 37.4,66.7" fill="#4fb7a7"/><polygon points="57.8,78.5 57.8,102.0 37.4,90.2" fill="#4fb7a7"/><polygon points="57.8,102.0 57.8,125.5 37.4,113.8" fill="#4fb7a7"/><polygon points="57.8,125.5 57.8,149.1 37.4,137.3" fill="#4fb7a7"/><polygon points="57.8,149.1 57.8,172.7 37.4,160.9" fill="#4fb7a7"/><polygon points="57.8,172.7 57.8,196.2 37.4,184.4" fill="#4fb7a7"/><polygon points="78.2,43.1 78.2,66.7 57.8,54.9" fill="#4fb7a7"/><polygon points="78.2,66.7 78.2,90.2 57.8,78.5" fill="#4fb7a7"/><polygon points="78.2,90.2 78.2,113.8 57.8,102.0" fill="#4fb7a7"/><polygon points="78.2,113.8 78.2,137.3 57.8,125.6" fill="#4fb7a7"/><polygon points="78.2,137.3 78.2,160.9 57.8,149.1" fill="#4fb7a7"/><polygon points="78.2,160.9 78.2,184.4 57.8,172.7" fill="#4fb7a7"/><polygon points="78.2,184.4 78.2,208.0 57.8,196.2" fill="#4fb7a7"/><polygon points="98.6,54.9 98.6,78.5 78.2,66.7" fill="#4fb7a7"/><polygon points="98.6,78.5 98.6,102.0 78.2,90.2" fill="#4fb7a7"/><polygon points="98.6,102.0 98.6,125.5 78.2,113.8" fill="#4fb7a7"/><polygon points="98.6,125.5 98.6,149.1 78.2,137.3" fill="#4fb7a7"/><polygon points="98.6,149.1 98.6,172.7 78.2,160.9" fill="#4fb7a7"/><polygon points="98.6,172.7 98.6,196.2 78.2,184.4" fill="#4fb7a7"/><polygon points="98.6,196.2 98.6,219.8 78.2,208.0" fill="#4fb7a7"/><polygon points="119.0,66.7 119.0,90.2 98.6,78.5" fill="#4fb7a7"/><polygon points="119.0,90.2 119.0,113.8 98.6,102.0" fill="#4fb7a7"/><polygon points="119.0,113.8 119.0,137.3 98.6,125.6" fill="#4fb7a7"/><polygon points="119.0,137.3 119.0,160.9 98.6,149.1" fill="#4fb7a7"/><polygon points="119.0,160.9 119.0,184.4 98.6,172.7" fill="#4fb7a7"/><polygon points="119.0,184.4 119.0,208.0 98.6,196.2" fill="#4fb7a7"/><polygon points="119.0,208.0 119.0,231.5 98.6,219.8" fill="#4fb7a7"/><line x1="17.0" y1="61.6" x2="17.0" y2="142.4" stroke="#2c343a" stroke-width="2.1"/><line x1="37.4" y1="61.6" x2="37.4" y2="142.4" stroke="#2c343a" stroke-width="2.1"/><line x1="57.8" y1="61.6" x2="57.8" y2="142.4" stroke="#2c343a" stroke-width="2.1"/><line x1="78.2" y1="61.6" x2="78.2" y2="142.4" stroke="#2c343a" stroke-width="2.1"/><line x1="98.6" y1="61.6" x2="98.6" y2="142.4" stroke="#2c343a" stroke-width="2.1"/><line x1="-3.4" y1="-27.5" x2="119.0" y2="43.1" stroke="#2c343a" stroke-width="2.1"/><line x1="-3.4" y1="43.1" x2="119.0" y2="-27.5" stroke="#2c343a" stroke-width="2.1"/><line x1="-3.4" y1="-4.0" x2="119.0" y2="66.7" stroke="#2c343a" stroke-width="2.1"/><line x1="-3.4" y1="66.7" x2="119.0" y2="-4.0" stroke="#2c343a" stroke-width="2.1"/><line x1="-3.4" y1="19.6" x2="119.0" y2="90.2" stroke="#2c343a" stroke-width="2.1"/><line x1="-3.4" y1="90.2" x2="119.0" y2="19.6" stroke="#2c343a" stroke-width="2.1"/><line x1="-3.4" y1="43.1" x2="119.0" y2="113.8" stroke="#2c343a" stroke-width="2.1"/><line x1="-3.4" y1="113.8" x2="119.0" y2="43.1" stroke="#2c343a" stroke-width="2.1"/><line x1="-3.4" y1="66.7" x2="119.0" y2="137.3" stroke="#2c343a" stroke-width="2.1"/><line x1="-3.4" y1="137.3" x2="119.0" y2="66.7" stroke="#2c343a" stroke-width="2.1"/><line x1="-3.4" y1="90.2" x2="119.0" y2="160.9" stroke="#2c343a" stroke-width="2.1"/><line x1="-3.4" y1="160.9" x2="119.0" y2="90.2" stroke="#2c343a" stroke-width="2.1"/><line x1="-3.4" y1="113.8" x2="119.0" y2="184.4" stroke="#2c343a" stroke-width="2.1"/><line x1="-3.4" y1="184.4" x2="119.0" y2="113.8" stroke="#2c343a" stroke-width="2.1"/><line x1="-3.4" y1="137.3" x2="119.0" y2="208.0" stroke="#2c343a" stroke-width="2.1"/><line x1="-3.4" y1="208.0" x2="119.0" y2="137.3" stroke="#2c343a" stroke-width="2.1"/><line x1="-3.4" y1="160.9" x2="119.0" y2="231.5" stroke="#2c343a" stroke-width="2.1"/><line x1="-3.4" y1="231.5" x2="119.0" y2="160.9" stroke="#2c343a" stroke-width="2.1"/></g><g fill="#fff"><rect x="49.7" y="205.8" width="13.7" height="16.2"/><rect x="66.8" y="205.8" width="13.4" height="10.2"/><rect x="49.7" y="225.7" width="13.7" height="10.3"/><rect x="66.8" y="219.2" width="13.4" height="16.8"/></g><path d="M71.72,300.93 L68.61,306.31 L65.66,304.73 L61.91,306.89 L61.81,310.24 L55.59,310.24 L55.49,306.89 L51.74,304.73 L48.79,306.31 L45.68,300.93 L48.53,299.16 L48.53,294.84 L45.68,293.07 L48.79,287.69 L51.74,289.27 L55.49,287.11 L55.59,283.76 L61.81,283.76 L61.91,287.11 L65.66,289.27 L68.61,287.69 L71.72,293.07 L68.87,294.84 L68.87,299.16Z M63.20,297.00 a4.5,4.5 0 1 0 -9.00,0 a4.5,4.5 0 1 0 9.00,0Z" fill="#d6d6d6" fill-rule="evenodd" stroke="#d6d6d6" stroke-width="1.2" stroke-linejoin="round"/><path d="M84.51,289.54 L82.98,292.19 L81.45,291.32 L79.65,292.36 L79.63,294.12 L76.57,294.12 L76.55,292.36 L74.75,291.32 L73.22,292.19 L71.69,289.54 L73.21,288.64 L73.21,286.56 L71.69,285.66 L73.22,283.01 L74.75,283.88 L76.55,282.84 L76.57,281.08 L79.63,281.08 L79.65,282.84 L81.45,283.88 L82.98,283.01 L84.51,285.66 L82.99,286.56 L82.99,288.64Z M80.30,287.60 a2.2,2.2 0 1 0 -4.40,0 a2.2,2.2 0 1 0 4.40,0Z" fill="#d6d6d6" fill-rule="evenodd" stroke="#d6d6d6" stroke-width="1.2" stroke-linejoin="round"/><path d="M84.51,307.94 L82.98,310.59 L81.45,309.72 L79.65,310.76 L79.63,312.52 L76.57,312.52 L76.55,310.76 L74.75,309.72 L73.22,310.59 L71.69,307.94 L73.21,307.04 L73.21,304.96 L71.69,304.06 L73.22,301.41 L74.75,302.28 L76.55,301.24 L76.57,299.48 L79.63,299.48 L79.65,301.24 L81.45,302.28 L82.98,301.41 L84.51,304.06 L82.99,304.96 L82.99,307.04Z M80.30,306.00 a2.2,2.2 0 1 0 -4.40,0 a2.2,2.2 0 1 0 4.40,0Z" fill="#d6d6d6" fill-rule="evenodd" stroke="#d6d6d6" stroke-width="1.2" stroke-linejoin="round"/><g stroke="#fff" stroke-linecap="round"><line x1="54.6" y1="363" x2="76.6" y2="384" stroke-width="5.4"/><line x1="55" y1="383.6" x2="75.6" y2="363" stroke-width="3.8"/></g><g fill="#fff"><circle cx="53.8" cy="384.7" r="5.5"/><circle cx="76.8" cy="361.8" r="5.5"/><circle cx="53.4" cy="361.6" r="6"/><circle cx="77.4" cy="385.4" r="6"/></g><g fill="#2c343a"><circle cx="53.8" cy="384.7" r="2.5"/><circle cx="76.8" cy="361.8" r="2.5"/><rect x="-2" y="-10" width="4" height="8.6" transform="translate(53.4,361.6) rotate(-45)"/><rect x="-2" y="-10" width="4" height="8.6" transform="translate(77.4,385.4) rotate(135)"/></g><path d="M44.1,443.8 Q49.5,437.5 57.1,434.1" fill="none" stroke="#7f878c" stroke-width="0.9" stroke-dasharray="1.2 0.8"/><path d="M57.1,434.1 Q63,431.9 68.5,431.6" fill="none" stroke="#b9bec1" stroke-width="1.7" stroke-dasharray="2.6 0.6"/><path d="M68.5,431.7 Q73.5,431.4 78,433.2" fill="none" stroke="#cdd1d3" stroke-width="2.6" stroke-dasharray="3.2 0.7"/><path d="M77.6,433 Q82.5,435 86,438.8" fill="none" stroke="#d8dbdd" stroke-width="3.5" stroke-dasharray="3.6 0.8"/><line x1="63.2" y1="448.2" x2="69.4" y2="439.4" stroke="#d6d9db" stroke-width="1.2"/><circle cx="62.5" cy="449.3" r="1.5" fill="none" stroke="#d6d9db" stroke-width="0.9"/><defs><clipPath id="piec"><path d="M61.4,512.1 A16.3,16.3 0 1 0 78.1,530.6 A11.5,11.5 0 0 1 61.4,527.3 Z"/><path d="M69,506 A15.8,15.8 0 0 1 84.65,519.6 Q77.7,527 69,520.7 Z"/></clipPath></defs><g fill="#dcdee0"><path d="M61.4,512.1 A16.3,16.3 0 1 0 78.1,530.6 A11.5,11.5 0 0 1 61.4,527.3 Z"/><path d="M69,506 A15.8,15.8 0 0 1 84.65,519.6 Q77.7,527 69,520.7 Z"/></g><g clip-path="url(#piec)"><polygon points="46.3,484.7 46.3,493.4 38.8,489.1" fill="#c3c5c8"/><polygon points="46.3,493.4 46.3,502.1 38.8,497.8" fill="#c3c5c8"/><polygon points="46.3,502.1 46.3,510.9 38.8,506.5" fill="#c3c5c8"/><polygon points="46.3,510.9 46.3,519.6 38.8,515.2" fill="#c3c5c8"/><polygon points="46.3,519.6 46.3,528.3 38.8,523.9" fill="#c3c5c8"/><polygon points="46.3,528.3 46.3,537.0 38.8,532.7" fill="#c3c5c8"/><polygon points="46.3,537.0 46.3,545.7 38.8,541.4" fill="#c3c5c8"/><polygon points="46.3,545.7 46.3,554.5 38.8,550.1" fill="#c3c5c8"/><polygon points="46.3,554.5 46.3,563.2 38.8,558.8" fill="#c3c5c8"/><polygon points="53.8,489.1 53.8,497.8 46.3,493.4" fill="#c3c5c8"/><polygon points="53.8,497.8 53.8,506.5 46.3,502.1" fill="#c3c5c8"/><polygon points="53.8,506.5 53.8,515.2 46.3,510.9" fill="#c3c5c8"/><polygon points="53.8,515.2 53.8,523.9 46.3,519.6" fill="#c3c5c8"/><polygon points="53.8,523.9 53.8,532.7 46.3,528.3" fill="#c3c5c8"/><polygon points="53.8,532.7 53.8,541.4 46.3,537.0" fill="#c3c5c8"/><polygon points="53.8,541.4 53.8,550.1 46.3,545.7" fill="#c3c5c8"/><polygon points="53.8,550.1 53.8,558.8 46.3,554.5" fill="#c3c5c8"/><polygon points="53.8,558.8 53.8,567.5 46.3,563.2" fill="#c3c5c8"/><polygon points="61.4,493.4 61.4,502.1 53.9,497.8" fill="#c3c5c8"/><polygon points="61.4,502.1 61.4,510.9 53.9,506.5" fill="#c3c5c8"/><polygon points="61.4,510.9 61.4,519.6 53.9,515.2" fill="#c3c5c8"/><polygon points="61.4,519.6 61.4,528.3 53.9,523.9" fill="#c3c5c8"/><polygon points="61.4,528.3 61.4,537.0 53.9,532.7" fill="#c3c5c8"/><polygon points="61.4,537.0 61.4,545.7 53.9,541.4" fill="#c3c5c8"/><polygon points="61.4,545.7 61.4,554.5 53.9,550.1" fill="#c3c5c8"/><polygon points="61.4,554.5 61.4,563.2 53.9,558.8" fill="#c3c5c8"/><polygon points="61.4,563.2 61.4,571.9 53.9,567.5" fill="#c3c5c8"/><polygon points="69.0,497.8 69.0,506.5 61.4,502.1" fill="#c3c5c8"/><polygon points="69.0,506.5 69.0,515.2 61.4,510.9" fill="#c3c5c8"/><polygon points="69.0,515.2 69.0,523.9 61.4,519.6" fill="#c3c5c8"/><polygon points="69.0,523.9 69.0,532.7 61.4,528.3" fill="#c3c5c8"/><polygon points="69.0,532.7 69.0,541.4 61.4,537.0" fill="#c3c5c8"/><polygon points="69.0,541.4 69.0,550.1 61.4,545.7" fill="#c3c5c8"/><polygon points="69.0,550.1 69.0,558.8 61.4,554.5" fill="#c3c5c8"/><polygon points="69.0,558.8 69.0,567.5 61.4,563.2" fill="#c3c5c8"/><polygon points="69.0,567.5 69.0,576.2 61.4,571.9" fill="#c3c5c8"/><polygon points="76.5,502.1 76.5,510.9 69.0,506.5" fill="#c3c5c8"/><polygon points="76.5,510.9 76.5,519.6 69.0,515.2" fill="#c3c5c8"/><polygon points="76.5,519.6 76.5,528.3 69.0,523.9" fill="#c3c5c8"/><polygon points="76.5,528.3 76.5,537.0 69.0,532.7" fill="#c3c5c8"/><polygon points="76.5,537.0 76.5,545.7 69.0,541.4" fill="#c3c5c8"/><polygon points="76.5,545.7 76.5,554.5 69.0,550.1" fill="#c3c5c8"/><polygon points="76.5,554.5 76.5,563.2 69.0,558.8" fill="#c3c5c8"/><polygon points="76.5,563.2 76.5,571.9 69.0,567.5" fill="#c3c5c8"/><polygon points="76.5,571.9 76.5,580.6 69.0,576.2" fill="#c3c5c8"/><polygon points="84.0,506.5 84.0,515.2 76.5,510.9" fill="#c3c5c8"/><polygon points="84.0,515.2 84.0,523.9 76.5,519.6" fill="#c3c5c8"/><polygon points="84.0,523.9 84.0,532.7 76.5,528.3" fill="#c3c5c8"/><polygon points="84.0,532.7 84.0,541.4 76.5,537.0" fill="#c3c5c8"/><polygon points="84.0,541.4 84.0,550.1 76.5,545.7" fill="#c3c5c8"/><polygon points="84.0,550.1 84.0,558.8 76.5,554.5" fill="#c3c5c8"/><polygon points="84.0,558.8 84.0,567.5 76.5,563.2" fill="#c3c5c8"/><polygon points="84.0,567.5 84.0,576.2 76.5,571.9" fill="#c3c5c8"/><polygon points="84.0,576.2 84.0,585.0 76.5,580.6" fill="#c3c5c8"/><polygon points="91.6,510.9 91.6,519.6 84.0,515.2" fill="#c3c5c8"/><polygon points="91.6,519.6 91.6,528.3 84.0,523.9" fill="#c3c5c8"/><polygon points="91.6,528.3 91.6,537.0 84.0,532.7" fill="#c3c5c8"/><polygon points="91.6,537.0 91.6,545.7 84.0,541.4" fill="#c3c5c8"/><polygon points="91.6,545.7 91.6,554.5 84.0,550.1" fill="#c3c5c8"/><polygon points="91.6,554.5 91.6,563.2 84.0,558.8" fill="#c3c5c8"/><polygon points="91.6,563.2 91.6,571.9 84.0,567.5" fill="#c3c5c8"/><polygon points="91.6,571.9 91.6,580.6 84.0,576.2" fill="#c3c5c8"/><polygon points="91.6,580.6 91.6,589.3 84.0,585.0" fill="#c3c5c8"/><polygon points="99.1,515.2 99.1,523.9 91.6,519.6" fill="#c3c5c8"/><polygon points="99.1,523.9 99.1,532.7 91.6,528.3" fill="#c3c5c8"/><polygon points="99.1,532.7 99.1,541.4 91.6,537.0" fill="#c3c5c8"/><polygon points="99.1,541.4 99.1,550.1 91.6,545.7" fill="#c3c5c8"/><polygon points="99.1,550.1 99.1,558.8 91.6,554.5" fill="#c3c5c8"/><polygon points="99.1,558.8 99.1,567.5 91.6,563.2" fill="#c3c5c8"/><polygon points="99.1,567.5 99.1,576.2 91.6,571.9" fill="#c3c5c8"/><polygon points="99.1,576.2 99.1,585.0 91.6,580.6" fill="#c3c5c8"/><polygon points="99.1,585.0 99.1,593.7 91.6,589.3" fill="#c3c5c8"/><line x1="38.8" y1="500" x2="38.8" y2="550" stroke="#2c343a" stroke-width="0.8" opacity=".8"/><line x1="46.3" y1="500" x2="46.3" y2="550" stroke="#2c343a" stroke-width="0.8" opacity=".8"/><line x1="53.9" y1="500" x2="53.9" y2="550" stroke="#2c343a" stroke-width="0.8" opacity=".8"/><line x1="61.4" y1="500" x2="61.4" y2="550" stroke="#2c343a" stroke-width="0.8" opacity=".8"/><line x1="69.0" y1="500" x2="69.0" y2="550" stroke="#2c343a" stroke-width="0.8" opacity=".8"/><line x1="76.5" y1="500" x2="76.5" y2="550" stroke="#2c343a" stroke-width="0.8" opacity=".8"/><line x1="84.0" y1="500" x2="84.0" y2="550" stroke="#2c343a" stroke-width="0.8" opacity=".8"/><line x1="91.6" y1="500" x2="91.6" y2="550" stroke="#2c343a" stroke-width="0.8" opacity=".8"/><line x1="23.6" y1="454.2" x2="99.2" y2="497.8" stroke="#2c343a" stroke-width="0.8" opacity=".8"/><line x1="23.6" y1="497.8" x2="99.2" y2="454.2" stroke="#2c343a" stroke-width="0.8" opacity=".8"/><line x1="23.6" y1="462.9" x2="99.2" y2="506.5" stroke="#2c343a" stroke-width="0.8" opacity=".8"/><line x1="23.6" y1="506.5" x2="99.2" y2="462.9" stroke="#2c343a" stroke-width="0.8" opacity=".8"/><line x1="23.6" y1="471.6" x2="99.2" y2="515.2" stroke="#2c343a" stroke-width="0.8" opacity=".8"/><line x1="23.6" y1="515.2" x2="99.2" y2="471.6" stroke="#2c343a" stroke-width="0.8" opacity=".8"/><line x1="23.6" y1="480.4" x2="99.2" y2="523.9" stroke="#2c343a" stroke-width="0.8" opacity=".8"/><line x1="23.6" y1="523.9" x2="99.2" y2="480.4" stroke="#2c343a" stroke-width="0.8" opacity=".8"/><line x1="23.6" y1="489.1" x2="99.2" y2="532.7" stroke="#2c343a" stroke-width="0.8" opacity=".8"/><line x1="23.6" y1="532.7" x2="99.2" y2="489.1" stroke="#2c343a" stroke-width="0.8" opacity=".8"/><line x1="23.6" y1="497.8" x2="99.2" y2="541.4" stroke="#2c343a" stroke-width="0.8" opacity=".8"/><line x1="23.6" y1="541.4" x2="99.2" y2="497.8" stroke="#2c343a" stroke-width="0.8" opacity=".8"/><line x1="23.6" y1="506.5" x2="99.2" y2="550.1" stroke="#2c343a" stroke-width="0.8" opacity=".8"/><line x1="23.6" y1="550.1" x2="99.2" y2="506.5" stroke="#2c343a" stroke-width="0.8" opacity=".8"/><line x1="23.6" y1="515.2" x2="99.2" y2="558.8" stroke="#2c343a" stroke-width="0.8" opacity=".8"/><line x1="23.6" y1="558.8" x2="99.2" y2="515.2" stroke="#2c343a" stroke-width="0.8" opacity=".8"/><line x1="23.6" y1="523.9" x2="99.2" y2="567.5" stroke="#2c343a" stroke-width="0.8" opacity=".8"/><line x1="23.6" y1="567.5" x2="99.2" y2="523.9" stroke="#2c343a" stroke-width="0.8" opacity=".8"/><line x1="23.6" y1="532.7" x2="99.2" y2="576.2" stroke="#2c343a" stroke-width="0.8" opacity=".8"/><line x1="23.6" y1="576.2" x2="99.2" y2="532.7" stroke="#2c343a" stroke-width="0.8" opacity=".8"/><line x1="23.6" y1="541.4" x2="99.2" y2="585.0" stroke="#2c343a" stroke-width="0.8" opacity=".8"/><line x1="23.6" y1="585.0" x2="99.2" y2="541.4" stroke="#2c343a" stroke-width="0.8" opacity=".8"/><line x1="23.6" y1="550.1" x2="99.2" y2="593.7" stroke="#2c343a" stroke-width="0.8" opacity=".8"/><line x1="23.6" y1="593.7" x2="99.2" y2="550.1" stroke="#2c343a" stroke-width="0.8" opacity=".8"/><line x1="23.6" y1="558.8" x2="99.2" y2="602.4" stroke="#2c343a" stroke-width="0.8" opacity=".8"/><line x1="23.6" y1="602.4" x2="99.2" y2="558.8" stroke="#2c343a" stroke-width="0.8" opacity=".8"/></g><polygon points="64.9,634.1 64.9,616.4 80.5,625.2" fill="#1fb796"/><polygon points="64.9,634.1 80.5,625.2 80.5,643.0" fill="#19a388"/><polygon points="64.9,634.1 80.5,643.0 64.9,651.8" fill="#1fb796"/><polygon points="64.9,634.1 64.9,651.8 49.3,643.0" fill="#19a388"/><polygon points="64.9,634.1 49.3,643.0 49.3,625.2" fill="#1fb796"/><polygon points="64.9,634.1 49.3,625.2 64.9,616.4" fill="#19a388"/><line x1="64.9" y1="634.1" x2="64.9" y2="615.5" stroke="#2c343a" stroke-width="2.0"/><line x1="64.9" y1="634.1" x2="81.3" y2="624.8" stroke="#2c343a" stroke-width="2.0"/><line x1="64.9" y1="634.1" x2="81.3" y2="643.4" stroke="#2c343a" stroke-width="2.0"/><line x1="64.9" y1="634.1" x2="64.9" y2="652.7" stroke="#2c343a" stroke-width="2.0"/><line x1="64.9" y1="634.1" x2="48.5" y2="643.4" stroke="#2c343a" stroke-width="2.0"/><line x1="64.9" y1="634.1" x2="48.5" y2="624.8" stroke="#2c343a" stroke-width="2.0"/><circle cx="61.9" cy="1329.2" r="16.8" fill="#d2d5d8"/></svg><span class="t" style="left:54.6px;top:1315.2px;font-size:30px;color:#2c343a;font-weight:700;">?</span><span class="t" style="left:19.8px;top:1390.9px;font-size:23.5px;color:#dcdcdc;letter-spacing:-1.00px;">v0.8.132</span><div class="a" style="left:92.8px;top:1188.9px;width:37.4px;height:89.3px;background:#565d61;border-radius:7px 0 0 7px"></div><svg width="40" height="90" style="left:92.8px;top:1188.9px"><path d="M11.6,32.3 L24.7,45.2 L11.6,58.1" fill="none" stroke="#d3d6d8" stroke-width="5"/></svg>
<div class="a" style="left:161.1px;top:239.2px;width:100.6px;height:100.6px;border-radius:50%;background:#2e2e2e"></div><div class="a" style="left:194.1px;top:277.9px;width:36.3px;height:3.9px;background:#d4d7d9"></div><div class="a" style="left:194.1px;top:287.7px;width:36.3px;height:3.9px;background:#d4d7d9"></div><div class="a" style="left:194.1px;top:297.7px;width:36.3px;height:3.9px;background:#d4d7d9"></div><div class="a" style="left:167.4px;top:1335.7px;width:100.4px;height:100.4px;border-radius:50%;background:#2e2e2e"></div><svg width="40" height="40" viewBox="200 1368 40 40" style="left:200px;top:1368px"><g stroke="#6aa0b0" stroke-width="0.9"><line x1="220.3" y1="1380.5" x2="208" y2="1386"/><line x1="220.3" y1="1380.5" x2="227.5" y2="1386.6"/><line x1="208.3" y1="1390.2" x2="219.3" y2="1390.2"/><line x1="208.3" y1="1390.2" x2="208.1" y2="1394.6"/></g><g fill="#dfe3e6"><circle cx="220.3" cy="1380.7" r="4.6"/><circle cx="220.6" cy="1371.8" r="2.3"/><circle cx="208.4" cy="1385.6" r="2.3"/><circle cx="227.8" cy="1386.8" r="2.3"/><circle cx="219.5" cy="1390.2" r="2.5"/><circle cx="208.1" cy="1394.8" r="2.4"/></g></svg><svg width="50" height="50" viewBox="2440 270 50 50" style="left:2440px;top:270px"><path d="M2467.6,296.5 Q2469.1,296.5 2470.6,298.1 L2486.1,306.3 Q2487.6,307.2 2486.1,308.09999999999997 L2470.6,316.29999999999995 Q2467.6,317.9 2464.6,316.29999999999995 L2449.1,308.09999999999997 Q2447.6,307.2 2449.1,306.3 L2464.6,298.1 Q2466.1,296.5 2467.6,296.5Z" fill="#d5d8da"/><path d="M2467.6,287.90000000000003 Q2469.1,287.90000000000003 2470.6,289.50000000000006 L2486.1,297.70000000000005 Q2487.6,298.6 2486.1,299.5 L2470.6,307.7 Q2467.6,309.3 2464.6,307.7 L2449.1,299.5 Q2447.6,298.6 2449.1,297.70000000000005 L2464.6,289.50000000000006 Q2466.1,287.90000000000003 2467.6,287.90000000000003Z" fill="#8b8e91"/><path d="M2467.6,279.3 Q2469.1,279.3 2470.6,280.90000000000003 L2486.1,289.1 Q2487.6,290 2486.1,290.9 L2470.6,299.09999999999997 Q2467.6,300.7 2464.6,299.09999999999997 L2449.1,290.9 Q2447.6,290 2449.1,289.1 L2464.6,280.90000000000003 Q2466.1,279.3 2467.6,279.3Z" fill="#d5d8da"/></svg><span class="t" style="left:2506.0px;top:284.2px;font-size:30.5px;color:rgba(255,255,255,.9);letter-spacing:-0.36px;">Layers</span><div class="a" style="left:2646.6px;top:258.7px;width:223.6px;height:80px;border-radius:13px;background:#51b1a1"></div><div class="a" style="left:2787.7px;top:258.7px;width:2.6px;height:80px;background:#fff"></div><span class="t" style="left:2678.2px;top:283.8px;font-size:30.5px;color:rgba(255,255,255,.9);letter-spacing:-0.75px;">Share</span><svg width="40" height="40" viewBox="0 0 40 40" style="left:2811.4px;top:279.9px"><g transform="scale(1.57)" fill="none" stroke="#fff" stroke-width="2" stroke-linecap="round" stroke-linejoin="round"><path d="M10 13a5 5 0 0 0 7.54.54l3-3a5 5 0 0 0-7.07-7.07l-1.72 1.71"/><path d="M14 11a5 5 0 0 0-7.54-.54l-3 3a5 5 0 0 0 7.07 7.07l1.71-1.71"/></g></svg><div class="a" style="left:1388.1px;top:1228.1px;width:255.1px;height:191px;border-radius:28px;background:#212121;overflow:hidden"><div class="a" style="left:0;top:0;width:95.9px;height:95.6px;background:#51b1a0"></div><div class="a" style="left:96.7px;top:15.5px;width:1.2px;height:160px;background:#404040"></div></div><svg width="260" height="195" viewBox="1388.1 1228.1 260 195" style="left:1388.1px;top:1228.1px"><path d="M1419.8,1257.4 L1453.8,1272.4 Q1458,1274.6 1454,1277 L1442.2,1281 L1438,1293 Q1435.6,1297.8 1432.6,1293.2 L1416.8,1260.6 Q1415.6,1256 1419.8,1257.4Z" fill="#fff" stroke="#fff" stroke-width="1.2" stroke-linejoin="round"/><g fill="#fff"><rect x="1425.2" y="1351.9" width="7.1" height="26" rx="3.5"/><rect x="1433.3" y="1348" width="7.1" height="30" rx="3.5"/><rect x="1441.7" y="1351.9" width="7.4" height="26" rx="3.6"/><rect x="1450.2" y="1360.1" width="7" height="22" rx="3.5"/><path d="M1425.2,1371.5 H1457.2 V1383 Q1457.2,1389 1454.9,1395.6 H1428.8 Q1425,1393.6 1422,1389.5 L1415.2,1379.2 Q1413.6,1376 1416.2,1374.2 Q1419,1373 1421.2,1375.2 L1425.2,1379.6Z"/></g><rect x="1521" y="1290.2" width="66.7" height="66.3" rx="14" fill="#d3d6d9"/></svg><span class="t" style="left:1535.2px;top:1289.0px;font-size:66px;color:#222;font-weight:700;">?</span>
<div class="a" style="left:2072px;top:360px;width:820px;height:1012px;border-radius:20px;box-shadow:0 0 0 0 #000"></div><div class="a" style="left:2081.7px;top:364px;width:800.5px;height:997.6px;background:#19262d;border-radius:16px;overflow:hidden;box-shadow:-3px 2px 10px rgba(0,0,0,.55)"><div class="a" style="left:54px;top:120px;width:680.4px;height:856.8px;background:#2d3a42"></div><div class="a" style="left:0;top:0;width:800.5px;height:128.6px;background:linear-gradient(to right,#2d373d 0%,#3b484f 65%,#404d55 100%);box-shadow:0 2px 5px rgba(0,0,0,.45)"></div></div><svg width="2904" height="1456" viewBox="0 0 2904 1456" style="left:0;top:0"><g fill="#e9eafc"><circle cx="2493.8" cy="378.1" r="4"/><circle cx="2505.9" cy="378.1" r="4"/><circle cx="2518" cy="378.1" r="4"/></g><path d="M2796.8,414.8 l26.4,26.4 M2823.2,414.8 l-26.4,26.4" stroke="#fff" stroke-width="4.1"/><g stroke="#69747b" stroke-width="1.5"><line x1="2185.3" y1="491.5" x2="2185.3" y2="1257.4"/><line x1="2238.8" y1="568.3" x2="2238.8" y2="627.6"/><line x1="2238.8" y1="796.4" x2="2238.8" y2="1143.2"/><line x1="2292.8" y1="850.4" x2="2292.8" y2="1089.2"/></g><circle cx="2242.1" cy="546.8" r="12.4" fill="none" stroke="#a4abb3" stroke-width="2.2"/><line x1="2234.9" y1="546.8" x2="2249.2999999999997" y2="546.8" stroke="#a4abb3" stroke-width="2.2"/><circle cx="2242.1" cy="775.2" r="12.4" fill="none" stroke="#a4abb3" stroke-width="2.2"/><line x1="2234.9" y1="775.2" x2="2249.2999999999997" y2="775.2" stroke="#a4abb3" stroke-width="2.2"/><circle cx="2296.3" cy="829.4" r="12.4" fill="none" stroke="#a4abb3" stroke-width="2.2"/><line x1="2289.1000000000004" y1="829.4" x2="2303.5" y2="829.4" stroke="#a4abb3" stroke-width="2.2"/><rect x="2310.1" y="853.9" width="348.5" height="60.4" fill="none" stroke="#e8452b" stroke-width="3"/><rect x="2869.9" y="964" width="11.6" height="308.5" rx="5.8" fill="#6b6b6b"/><g stroke="#fff" stroke-width="1.7" fill="none"><line x1="2096.2" y1="1338.4" x2="2120.4" y2="1315.2"/><path d="M2095.8,1329.5 v9.3 h9.4 M2111.4,1314.8 h9.4 v9.3"/></g></svg><div class="a" style="left:2135.7px;top:492.6px;width:680px;height:12px;overflow:hidden"><div class="a" style="left:-2135.7px;top:-492.6px;width:2904px;height:600px"><span class="t" style="left:2225.9px;top:472.2px;font-size:30px;color:#ece5c8;letter-spacing:1.24px;">&quot;internalTrafficPolicy&quot;</span><span class="t" style="left:2544.8px;top:472.2px;font-size:30px;color:#ece5c8;">:</span><span class="t" style="left:2563.2px;top:472.2px;font-size:30px;color:#d9a06d;letter-spacing:-0.25px;">&quot;Cluster&quot;</span></div></div><span class="t" style="left:2259.1px;top:528.9px;font-size:30px;color:#ece5c8;letter-spacing:1.00px;">&quot;ipFamilies&quot;</span><span class="t" style="left:2436.4px;top:528.9px;font-size:30px;color:#ece5c8;">:</span><span class="t" style="left:2455.3px;top:528.9px;font-size:30px;color:#f6ebbd;font-weight:700;">[</span><span class="t" style="left:2279.5px;top:582.9px;font-size:30px;color:#63b4c2;">0</span><span class="t" style="left:2310.0px;top:582.9px;font-size:30px;color:#ece5c8;">:</span><span class="t" style="left:2329.0px;top:582.9px;font-size:30px;color:#d9a06d;letter-spacing:-0.42px;">&quot;IPv4&quot;</span><span class="t" style="left:2230.7px;top:635.6px;font-size:30px;color:#f6ebbd;font-weight:700;">]</span><span class="t" style="left:2225.9px;top:697.6px;font-size:30px;color:#ece5c8;letter-spacing:1.09px;">&quot;ipFamilyPolicy&quot;</span><span class="t" style="left:2465.3px;top:697.6px;font-size:30px;color:#ece5c8;">:</span><span class="t" style="left:2483.8px;top:697.6px;font-size:30px;color:#d9a06d;letter-spacing:0.27px;">&quot;SingleStack&quot;</span><span class="t" style="left:2259.4px;top:756.8px;font-size:30px;color:#ece5c8;letter-spacing:2.08px;">&quot;ports&quot;</span><span class="t" style="left:2369.8px;top:756.8px;font-size:30px;color:#ece5c8;">:</span><span class="t" style="left:2388.4px;top:756.8px;font-size:30px;color:#f6ebbd;font-weight:700;">[</span><span class="t" style="left:2313.8px;top:810.3px;font-size:30px;color:#63b4c2;">0</span><span class="t" style="left:2344.3px;top:810.3px;font-size:30px;color:#ece5c8;">:</span><span class="t" style="left:2364.1px;top:810.3px;font-size:30px;color:#f6ebbd;font-weight:700;">{</span><span class="t" style="left:2333.5px;top:865.0px;font-size:30px;color:#ece5c8;letter-spacing:1.83px;">&quot;nodePort&quot;</span><span class="t" style="left:2504.2px;top:865.0px;font-size:30px;color:#ece5c8;">:</span><span class="t" style="left:2521.8px;top:865.0px;font-size:30px;color:#6e8594;letter-spacing:0.55px;">30091</span><span class="t" style="left:2333.5px;top:924.5px;font-size:30px;color:#ece5c8;letter-spacing:2.41px;">&quot;port&quot;</span><span class="t" style="left:2428.5px;top:924.5px;font-size:30px;color:#ece5c8;">:</span><span class="t" style="left:2447.2px;top:924.5px;font-size:30px;color:#6e8594;letter-spacing:3.85px;">80</span><span class="t" style="left:2333.5px;top:985.0px;font-size:30px;color:#ece5c8;letter-spacing:2.54px;">&quot;protocol&quot;</span><span class="t" style="left:2494.4px;top:985.0px;font-size:30px;color:#ece5c8;">:</span><span class="t" style="left:2512.8px;top:985.0px;font-size:30px;color:#d9a06d;letter-spacing:-1.07px;">&quot;TCP&quot;</span><span class="t" style="left:2333.5px;top:1045.6px;font-size:30px;color:#ece5c8;letter-spacing:1.66px;">&quot;targetPort&quot;</span><span class="t" style="left:2514.7px;top:1045.6px;font-size:30px;color:#ece5c8;">:</span><span class="t" style="left:2532.7px;top:1045.6px;font-size:30px;color:#6e8594;letter-spacing:4.35px;">80</span><span class="t" style="left:2285.2px;top:1096.6px;font-size:30px;color:#f6ebbd;font-weight:700;">}</span><span class="t" style="left:2230.9px;top:1151.6px;font-size:30px;color:#f6ebbd;font-weight:700;">]</span><span class="t" style="left:2225.3px;top:1213.4px;font-size:30px;color:#ece5c8;letter-spacing:1.43px;">&quot;sessionAffinity&quot;</span><span class="t" style="left:2470.8px;top:1213.4px;font-size:30px;color:#ece5c8;">:</span><span class="t" style="left:2489.3px;top:1213.4px;font-size:30px;color:#d9a06d;letter-spacing:0.14px;">&quot;None&quot;</span><span class="t" style="left:2177.0px;top:1265.6px;font-size:30px;color:#f6ebbd;font-weight:700;">}</span>
<div class="a" style="left:2764.4px;top:1336.2px;width:99.4px;height:99.4px;border-radius:50%;background:#2e2e2e"></div><svg width="50" height="50" viewBox="2790 1362 50 50" style="left:2790px;top:1362px"><circle cx="2809" cy="1380.9" r="11.2" fill="none" stroke="#dfe2e4" stroke-width="3.6"/><line x1="2817.6" y1="1389.6" x2="2828.6" y2="1400.8" stroke="#dfe2e4" stroke-width="4.2"/><path d="M2809,1376 v9.8 M2804.1,1380.9 h9.8" stroke="#dfe2e4" stroke-width="1.7"/></svg>
<div class="a" style="left:2832.2px;top:664.6px;width:69.6px;height:222.5px;background:#50b0a0;border-radius:8px 0 0 8px"></div><span class="t" style="left:2892.2px;top:845.3px;font-size:31.8px;color:#fff;transform-origin:0 0;transform:rotate(-90deg) translateY(-26.92px)">Feedback</span>
</div>
<div class="a" style="left:2902px;top:0;width:2px;height:1456px;background:#0b0b0b"></div><div class="a" style="left:0;top:1400px;width:2902px;height:52px;border:1.8px solid #4d4d4d;border-top:none;border-left-color:transparent;border-bottom-width:1.3px;border-radius:0 0 20px 20px"></div><div class="a" style="left:2900.2px;top:0;width:1.8px;height:1402px;background:#4d4d4d"></div><div class="a" style="left:0;top:1452px;width:150px;height:4px;background:linear-gradient(to right,#13264a,#0a0d14)"></div>
</body></html>
